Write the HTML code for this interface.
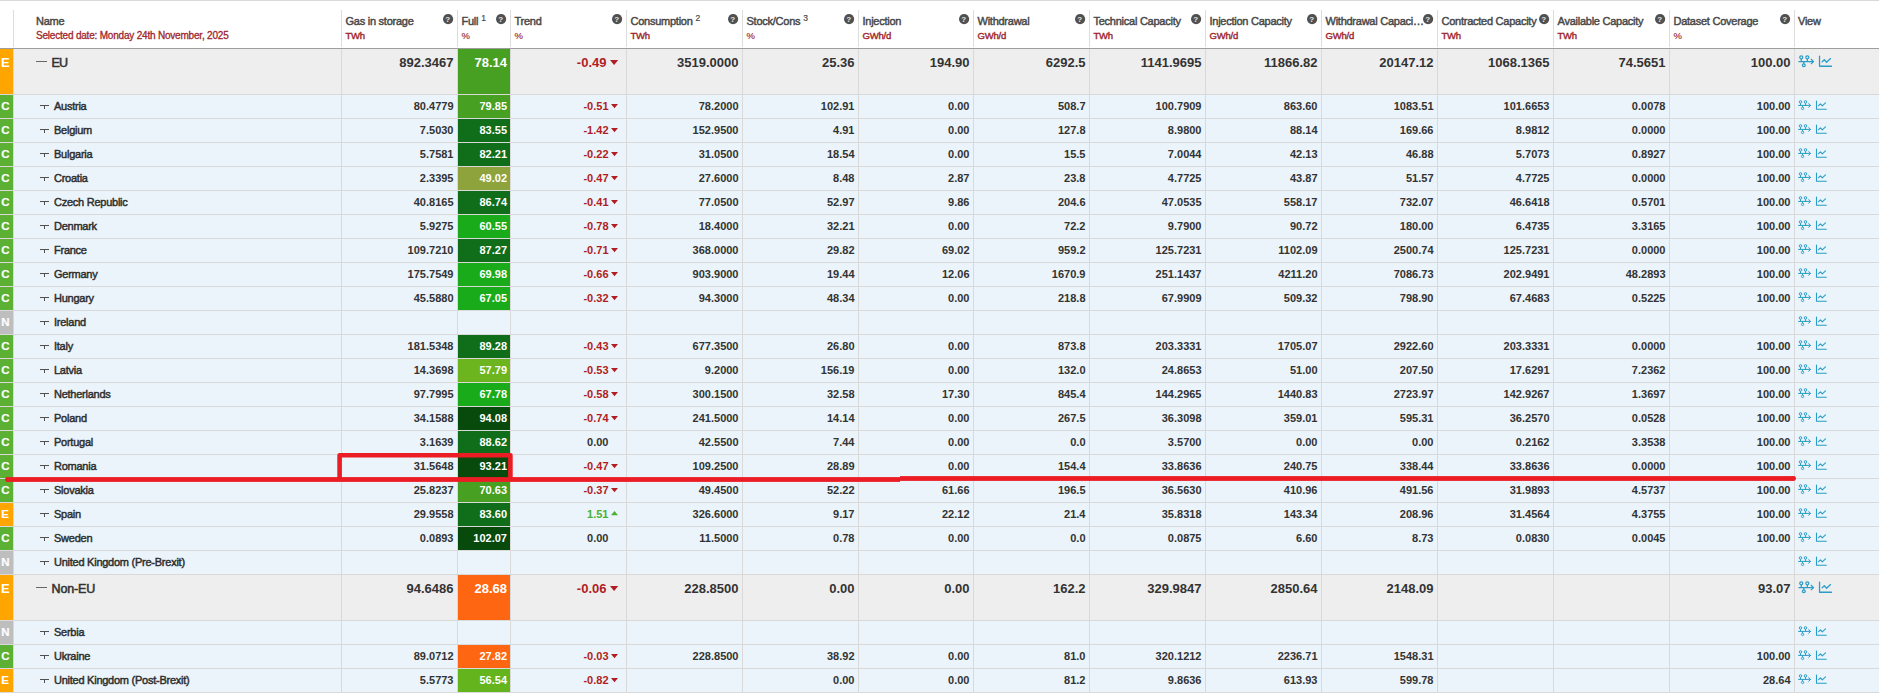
<!DOCTYPE html>
<html><head><meta charset="utf-8"><title>Gas storage</title>
<style>
html,body{margin:0;padding:0;background:#fff;}
body{width:1882px;height:693px;overflow:hidden;position:relative;font-family:"Liberation Sans",sans-serif;}
.a{position:absolute;}
.l{position:absolute;background:#d9d9d9;}
.t{position:absolute;white-space:nowrap;line-height:1;}
.ht{font-size:11px;color:#4a4a4a;}
.hu{font-size:9.5px;color:#a0262c;font-weight:bold;}
.sup{font-size:7px;color:#4a4a4a;}
.q{position:absolute;width:10px;height:10px;border-radius:5px;background:#4d4d4d;color:#fff;font-size:8px;font-weight:bold;text-align:center;line-height:10px;}
.n{font-weight:bold;color:#333;text-align:right;}
.code{position:absolute;color:#fff;font-weight:bold;text-align:center;}
svg{position:absolute;overflow:visible;}
</style></head><body>

<div class="l" style="left:0px;top:0px;width:1879px;height:1px;background:#d9d9d9"></div>
<div class="l" style="left:13px;top:10px;width:1px;height:37px;background:#dddddd"></div>
<div class="l" style="left:341px;top:10px;width:1px;height:37px;background:#dddddd"></div>
<div class="l" style="left:457px;top:10px;width:1px;height:37px;background:#dddddd"></div>
<div class="l" style="left:510px;top:10px;width:1px;height:37px;background:#dddddd"></div>
<div class="l" style="left:626px;top:10px;width:1px;height:37px;background:#dddddd"></div>
<div class="l" style="left:742px;top:10px;width:1px;height:37px;background:#dddddd"></div>
<div class="l" style="left:858px;top:10px;width:1px;height:37px;background:#dddddd"></div>
<div class="l" style="left:973px;top:10px;width:1px;height:37px;background:#dddddd"></div>
<div class="l" style="left:1089px;top:10px;width:1px;height:37px;background:#dddddd"></div>
<div class="l" style="left:1205px;top:10px;width:1px;height:37px;background:#dddddd"></div>
<div class="l" style="left:1321px;top:10px;width:1px;height:37px;background:#dddddd"></div>
<div class="l" style="left:1437px;top:10px;width:1px;height:37px;background:#dddddd"></div>
<div class="l" style="left:1553px;top:10px;width:1px;height:37px;background:#dddddd"></div>
<div class="l" style="left:1669px;top:10px;width:1px;height:37px;background:#dddddd"></div>
<div class="l" style="left:1794px;top:10px;width:1px;height:37px;background:#dddddd"></div>
<div class="l" style="left:0px;top:48px;width:1879px;height:1px;background:#9e9e9e"></div>
<div class="t " style="left:36.00px;top:16.05px;font-size:11px;color:#484848;letter-spacing:-0.25px;-webkit-text-stroke:0.45px #484848;">Name</div>
<div class="t " style="left:36.00px;top:31.45px;font-size:10px;color:#a0262c;letter-spacing:-0.2px;-webkit-text-stroke:0.3px #a0262c;">Selected date: Monday 24th November, 2025</div>
<div class="t " style="left:345.50px;top:16.05px;font-size:11px;color:#484848;letter-spacing:-0.25px;-webkit-text-stroke:0.45px #484848;">Gas in storage</div>
<div class="t " style="left:345.50px;top:30.90px;font-size:9.5px;color:#a0262c;letter-spacing:-0.2px;-webkit-text-stroke:0.4px #a0262c;">TWh</div>
<svg style="left:442.60px;top:14.2px" width="11" height="11"><circle cx="5.1" cy="5.1" r="5.1" fill="#505050"/></svg>
<div class="t" style="left:442.70px;top:15.6px;width:10px;text-align:center;font-size:8px;font-weight:bold;color:#e8e8e8">?</div>
<div class="t " style="left:461.50px;top:16.05px;font-size:11px;color:#484848;letter-spacing:-0.25px;-webkit-text-stroke:0.45px #484848;">Full</div>
<div class="t" style="left:481.22px;top:14px;font-size:8.5px;color:#4a4a4a;-webkit-text-stroke:0.2px #4a4a4a">1</div>
<div class="t " style="left:461.50px;top:30.90px;font-size:9.5px;color:#a0262c;-webkit-text-stroke:0.15px #a0262c;">%</div>
<svg style="left:495.60px;top:14.2px" width="11" height="11"><circle cx="5.1" cy="5.1" r="5.1" fill="#505050"/></svg>
<div class="t" style="left:495.70px;top:15.6px;width:10px;text-align:center;font-size:8px;font-weight:bold;color:#e8e8e8">?</div>
<div class="t " style="left:514.50px;top:16.05px;font-size:11px;color:#484848;letter-spacing:-0.25px;-webkit-text-stroke:0.45px #484848;">Trend</div>
<div class="t " style="left:514.50px;top:30.90px;font-size:9.5px;color:#a0262c;-webkit-text-stroke:0.15px #a0262c;">%</div>
<svg style="left:611.60px;top:14.2px" width="11" height="11"><circle cx="5.1" cy="5.1" r="5.1" fill="#505050"/></svg>
<div class="t" style="left:611.70px;top:15.6px;width:10px;text-align:center;font-size:8px;font-weight:bold;color:#e8e8e8">?</div>
<div class="t " style="left:630.50px;top:16.05px;font-size:11px;color:#484848;letter-spacing:-0.25px;-webkit-text-stroke:0.45px #484848;">Consumption</div>
<div class="t" style="left:695.56px;top:14px;font-size:8.5px;color:#4a4a4a;-webkit-text-stroke:0.2px #4a4a4a">2</div>
<div class="t " style="left:630.50px;top:30.90px;font-size:9.5px;color:#a0262c;letter-spacing:-0.2px;-webkit-text-stroke:0.4px #a0262c;">TWh</div>
<svg style="left:727.60px;top:14.2px" width="11" height="11"><circle cx="5.1" cy="5.1" r="5.1" fill="#505050"/></svg>
<div class="t" style="left:727.70px;top:15.6px;width:10px;text-align:center;font-size:8px;font-weight:bold;color:#e8e8e8">?</div>
<div class="t " style="left:746.50px;top:16.05px;font-size:11px;color:#484848;letter-spacing:-0.25px;-webkit-text-stroke:0.45px #484848;">Stock/Cons</div>
<div class="t" style="left:803.24px;top:14px;font-size:8.5px;color:#4a4a4a;-webkit-text-stroke:0.2px #4a4a4a">3</div>
<div class="t " style="left:746.50px;top:30.90px;font-size:9.5px;color:#a0262c;-webkit-text-stroke:0.15px #a0262c;">%</div>
<svg style="left:843.60px;top:14.2px" width="11" height="11"><circle cx="5.1" cy="5.1" r="5.1" fill="#505050"/></svg>
<div class="t" style="left:843.70px;top:15.6px;width:10px;text-align:center;font-size:8px;font-weight:bold;color:#e8e8e8">?</div>
<div class="t " style="left:862.50px;top:16.05px;font-size:11px;color:#484848;letter-spacing:-0.25px;-webkit-text-stroke:0.45px #484848;">Injection</div>
<div class="t " style="left:862.50px;top:30.90px;font-size:9.5px;color:#a0262c;letter-spacing:-0.2px;-webkit-text-stroke:0.4px #a0262c;">GWh/d</div>
<svg style="left:958.60px;top:14.2px" width="11" height="11"><circle cx="5.1" cy="5.1" r="5.1" fill="#505050"/></svg>
<div class="t" style="left:958.70px;top:15.6px;width:10px;text-align:center;font-size:8px;font-weight:bold;color:#e8e8e8">?</div>
<div class="t " style="left:977.50px;top:16.05px;font-size:11px;color:#484848;letter-spacing:-0.25px;-webkit-text-stroke:0.45px #484848;">Withdrawal</div>
<div class="t " style="left:977.50px;top:30.90px;font-size:9.5px;color:#a0262c;letter-spacing:-0.2px;-webkit-text-stroke:0.4px #a0262c;">GWh/d</div>
<svg style="left:1074.60px;top:14.2px" width="11" height="11"><circle cx="5.1" cy="5.1" r="5.1" fill="#505050"/></svg>
<div class="t" style="left:1074.70px;top:15.6px;width:10px;text-align:center;font-size:8px;font-weight:bold;color:#e8e8e8">?</div>
<div class="t " style="left:1093.50px;top:16.05px;font-size:11px;color:#484848;letter-spacing:-0.25px;-webkit-text-stroke:0.45px #484848;">Technical Capacity</div>
<div class="t " style="left:1093.50px;top:30.90px;font-size:9.5px;color:#a0262c;letter-spacing:-0.2px;-webkit-text-stroke:0.4px #a0262c;">TWh</div>
<svg style="left:1190.60px;top:14.2px" width="11" height="11"><circle cx="5.1" cy="5.1" r="5.1" fill="#505050"/></svg>
<div class="t" style="left:1190.70px;top:15.6px;width:10px;text-align:center;font-size:8px;font-weight:bold;color:#e8e8e8">?</div>
<div class="t " style="left:1209.50px;top:16.05px;font-size:11px;color:#484848;letter-spacing:-0.25px;-webkit-text-stroke:0.45px #484848;">Injection Capacity</div>
<div class="t " style="left:1209.50px;top:30.90px;font-size:9.5px;color:#a0262c;letter-spacing:-0.2px;-webkit-text-stroke:0.4px #a0262c;">GWh/d</div>
<svg style="left:1306.60px;top:14.2px" width="11" height="11"><circle cx="5.1" cy="5.1" r="5.1" fill="#505050"/></svg>
<div class="t" style="left:1306.70px;top:15.6px;width:10px;text-align:center;font-size:8px;font-weight:bold;color:#e8e8e8">?</div>
<div class="t " style="left:1325.50px;top:16.05px;font-size:11px;color:#484848;letter-spacing:-0.25px;-webkit-text-stroke:0.45px #484848;">Withdrawal Capaci…</div>
<div class="t " style="left:1325.50px;top:30.90px;font-size:9.5px;color:#a0262c;letter-spacing:-0.2px;-webkit-text-stroke:0.4px #a0262c;">GWh/d</div>
<svg style="left:1422.60px;top:14.2px" width="11" height="11"><circle cx="5.1" cy="5.1" r="5.1" fill="#505050"/></svg>
<div class="t" style="left:1422.70px;top:15.6px;width:10px;text-align:center;font-size:8px;font-weight:bold;color:#e8e8e8">?</div>
<div class="t " style="left:1441.50px;top:16.05px;font-size:11px;color:#484848;letter-spacing:-0.25px;-webkit-text-stroke:0.45px #484848;">Contracted Capacity</div>
<div class="t " style="left:1441.50px;top:30.90px;font-size:9.5px;color:#a0262c;letter-spacing:-0.2px;-webkit-text-stroke:0.4px #a0262c;">TWh</div>
<svg style="left:1538.60px;top:14.2px" width="11" height="11"><circle cx="5.1" cy="5.1" r="5.1" fill="#505050"/></svg>
<div class="t" style="left:1538.70px;top:15.6px;width:10px;text-align:center;font-size:8px;font-weight:bold;color:#e8e8e8">?</div>
<div class="t " style="left:1557.50px;top:16.05px;font-size:11px;color:#484848;letter-spacing:-0.25px;-webkit-text-stroke:0.45px #484848;">Available Capacity</div>
<div class="t " style="left:1557.50px;top:30.90px;font-size:9.5px;color:#a0262c;letter-spacing:-0.2px;-webkit-text-stroke:0.4px #a0262c;">TWh</div>
<svg style="left:1654.60px;top:14.2px" width="11" height="11"><circle cx="5.1" cy="5.1" r="5.1" fill="#505050"/></svg>
<div class="t" style="left:1654.70px;top:15.6px;width:10px;text-align:center;font-size:8px;font-weight:bold;color:#e8e8e8">?</div>
<div class="t " style="left:1673.50px;top:16.05px;font-size:11px;color:#484848;letter-spacing:-0.25px;-webkit-text-stroke:0.45px #484848;">Dataset Coverage</div>
<div class="t " style="left:1673.50px;top:30.90px;font-size:9.5px;color:#a0262c;-webkit-text-stroke:0.15px #a0262c;">%</div>
<svg style="left:1779.60px;top:14.2px" width="11" height="11"><circle cx="5.1" cy="5.1" r="5.1" fill="#505050"/></svg>
<div class="t" style="left:1779.70px;top:15.6px;width:10px;text-align:center;font-size:8px;font-weight:bold;color:#e8e8e8">?</div>
<div class="t " style="left:1798.00px;top:16.05px;font-size:11px;color:#484848;letter-spacing:-0.25px;-webkit-text-stroke:0.45px #484848;">View</div>
<div class="a" style="left:0px;top:49px;width:1879px;height:45px;background:#eeeeee"></div>
<div class="a" style="left:0px;top:49px;width:13px;height:45px;background:#ffa500"></div>
<div class="t " style="left:1.00px;top:56.23px;font-size:13px;color:#fff;font-weight:bold;">E</div>
<div class="a" style="left:36px;top:61px;width:11px;height:1px;background:#666"></div>
<div class="t " style="left:51.50px;top:56.69px;font-size:12.5px;color:#333;letter-spacing:-0.9px;-webkit-text-stroke:0.55px #333;">EU</div>
<div class="a" style="left:458px;top:49px;width:52px;height:45px;background:#48a023"></div>
<div class="t " style="right:1428.50px;top:56.23px;font-size:13px;color:#333;font-weight:bold;">892.3467</div>
<div class="t " style="right:1375.00px;top:56.23px;font-size:13px;color:#fff;font-weight:bold;">78.14</div>
<div class="t " style="right:1275.50px;top:56.23px;font-size:13px;color:#b01e24;font-weight:bold;">-0.49</div>
<svg style="left:609.8px;top:59.6px" width="9" height="6"><path d="M0 0H8.19L4.095 4.914Z" fill="#b01e24"/></svg>
<div class="t " style="right:1143.50px;top:56.23px;font-size:13px;color:#333;font-weight:bold;">3519.0000</div>
<div class="t " style="right:1027.50px;top:56.23px;font-size:13px;color:#333;font-weight:bold;">25.36</div>
<div class="t " style="right:912.50px;top:56.23px;font-size:13px;color:#333;font-weight:bold;">194.90</div>
<div class="t " style="right:796.50px;top:56.23px;font-size:13px;color:#333;font-weight:bold;">6292.5</div>
<div class="t " style="right:680.50px;top:56.23px;font-size:13px;color:#333;font-weight:bold;">1141.9695</div>
<div class="t " style="right:564.50px;top:56.23px;font-size:13px;color:#333;font-weight:bold;">11866.82</div>
<div class="t " style="right:448.50px;top:56.23px;font-size:13px;color:#333;font-weight:bold;">20147.12</div>
<div class="t " style="right:332.50px;top:56.23px;font-size:13px;color:#333;font-weight:bold;">1068.1365</div>
<div class="t " style="right:216.50px;top:56.23px;font-size:13px;color:#333;font-weight:bold;">74.5651</div>
<div class="t " style="right:91.50px;top:56.23px;font-size:13px;color:#333;font-weight:bold;">100.00</div>
<svg style="left:1795px;top:49px" width="22" height="20"><g transform="translate(-0.46 -0.1) scale(1.22)" fill="none" stroke="#2a9cc8" stroke-width="1.0245901639344261" stroke-linejoin="round"><path d="M3.2 10.4H15.6M13.4 8.3L15.6 10.4L13.4 12.5M5.5 10.4V8.2M10.5 10.4V8.2M7.6 10.4V12.2"/><circle cx="5.5" cy="6.9" r="1.25"/><circle cx="10.5" cy="6.9" r="1.25"/><circle cx="7.6" cy="13.4" r="1.15"/></g></svg>
<svg style="left:1795px;top:49px" width="40" height="20"><g transform="translate(-1.7 -0.05) scale(1.22)" fill="none" stroke="#2a9cc8" stroke-width="1.0655737704918034" stroke-linecap="round" stroke-linejoin="round"><path d="M21.5 6V14.2H31.3M23.6 10.6L25.4 8.8L27.3 10.9L30.5 7.9"/></g></svg>
<div class="l" style="left:0px;top:94px;width:1879px;height:1px;background:#d9d9d9"></div>
<div class="a" style="left:0px;top:95px;width:1879px;height:23px;background:#eaf4fa"></div>
<div class="a" style="left:0px;top:95px;width:13px;height:23px;background:#5cb034"></div>
<div class="t " style="left:1.30px;top:100.89px;font-size:11.5px;color:#fff;font-weight:bold;-webkit-text-stroke:0.15px #fff;">C</div>
<div class="a" style="left:40px;top:105px;width:9px;height:1px;background:#505050"></div>
<div class="a" style="left:44px;top:105px;width:1px;height:4px;background:#505050"></div>
<div class="t " style="left:54.00px;top:101.05px;font-size:11px;color:#2e2e2e;letter-spacing:-0.25px;-webkit-text-stroke:0.45px #2e2e2e;">Austria</div>
<div class="a" style="left:458px;top:95px;width:52px;height:23px;background:#48a023"></div>
<div class="t " style="right:1428.50px;top:101.05px;font-size:11px;color:#333;font-weight:bold;">80.4779</div>
<div class="t " style="right:1375.00px;top:101.05px;font-size:11px;color:#fff;font-weight:bold;">79.85</div>
<div class="t " style="right:1273.50px;top:101.05px;font-size:11px;color:#b01e24;font-weight:bold;">-0.51</div>
<svg style="left:611px;top:104px" width="9" height="6"><path d="M0 0H7L3.5 4.2Z" fill="#b01e24"/></svg>
<div class="t " style="right:1143.50px;top:101.05px;font-size:11px;color:#333;font-weight:bold;">78.2000</div>
<div class="t " style="right:1027.50px;top:101.05px;font-size:11px;color:#333;font-weight:bold;">102.91</div>
<div class="t " style="right:912.50px;top:101.05px;font-size:11px;color:#333;font-weight:bold;">0.00</div>
<div class="t " style="right:796.50px;top:101.05px;font-size:11px;color:#333;font-weight:bold;">508.7</div>
<div class="t " style="right:680.50px;top:101.05px;font-size:11px;color:#333;font-weight:bold;">100.7909</div>
<div class="t " style="right:564.50px;top:101.05px;font-size:11px;color:#333;font-weight:bold;">863.60</div>
<div class="t " style="right:448.50px;top:101.05px;font-size:11px;color:#333;font-weight:bold;">1083.51</div>
<div class="t " style="right:332.50px;top:101.05px;font-size:11px;color:#333;font-weight:bold;">101.6653</div>
<div class="t " style="right:216.50px;top:101.05px;font-size:11px;color:#333;font-weight:bold;">0.0078</div>
<div class="t " style="right:91.50px;top:101.05px;font-size:11px;color:#333;font-weight:bold;">100.00</div>
<svg style="left:1795px;top:95px" width="22" height="20"><g transform="translate(0 0) scale(1.0)" fill="none" stroke="#2a9cc8" stroke-width="1.0" stroke-linejoin="round"><path d="M3.2 10.4H15.6M13.4 8.3L15.6 10.4L13.4 12.5M5.5 10.4V8.2M10.5 10.4V8.2M7.6 10.4V12.2"/><circle cx="5.5" cy="6.9" r="1.25"/><circle cx="10.5" cy="6.9" r="1.25"/><circle cx="7.6" cy="13.4" r="1.15"/></g></svg>
<svg style="left:1795px;top:95px" width="40" height="20"><g transform="translate(0 0) scale(1.0)" fill="none" stroke="#2a9cc8" stroke-width="1.1" stroke-linecap="round" stroke-linejoin="round"><path d="M21.5 6V14.2H31.3M23.6 10.6L25.4 8.8L27.3 10.9L30.5 7.9"/></g></svg>
<div class="l" style="left:0px;top:118px;width:1879px;height:1px;background:#d9d9d9"></div>
<div class="a" style="left:0px;top:119px;width:1879px;height:23px;background:#eaf4fa"></div>
<div class="a" style="left:0px;top:119px;width:13px;height:23px;background:#5cb034"></div>
<div class="t " style="left:1.30px;top:124.89px;font-size:11.5px;color:#fff;font-weight:bold;-webkit-text-stroke:0.15px #fff;">C</div>
<div class="a" style="left:40px;top:129px;width:9px;height:1px;background:#505050"></div>
<div class="a" style="left:44px;top:129px;width:1px;height:4px;background:#505050"></div>
<div class="t " style="left:54.00px;top:125.05px;font-size:11px;color:#2e2e2e;letter-spacing:-0.25px;-webkit-text-stroke:0.45px #2e2e2e;">Belgium</div>
<div class="a" style="left:458px;top:119px;width:52px;height:23px;background:#106e1a"></div>
<div class="t " style="right:1428.50px;top:125.05px;font-size:11px;color:#333;font-weight:bold;">7.5030</div>
<div class="t " style="right:1375.00px;top:125.05px;font-size:11px;color:#fff;font-weight:bold;">83.55</div>
<div class="t " style="right:1273.50px;top:125.05px;font-size:11px;color:#b01e24;font-weight:bold;">-1.42</div>
<svg style="left:611px;top:128px" width="9" height="6"><path d="M0 0H7L3.5 4.2Z" fill="#b01e24"/></svg>
<div class="t " style="right:1143.50px;top:125.05px;font-size:11px;color:#333;font-weight:bold;">152.9500</div>
<div class="t " style="right:1027.50px;top:125.05px;font-size:11px;color:#333;font-weight:bold;">4.91</div>
<div class="t " style="right:912.50px;top:125.05px;font-size:11px;color:#333;font-weight:bold;">0.00</div>
<div class="t " style="right:796.50px;top:125.05px;font-size:11px;color:#333;font-weight:bold;">127.8</div>
<div class="t " style="right:680.50px;top:125.05px;font-size:11px;color:#333;font-weight:bold;">8.9800</div>
<div class="t " style="right:564.50px;top:125.05px;font-size:11px;color:#333;font-weight:bold;">88.14</div>
<div class="t " style="right:448.50px;top:125.05px;font-size:11px;color:#333;font-weight:bold;">169.66</div>
<div class="t " style="right:332.50px;top:125.05px;font-size:11px;color:#333;font-weight:bold;">8.9812</div>
<div class="t " style="right:216.50px;top:125.05px;font-size:11px;color:#333;font-weight:bold;">0.0000</div>
<div class="t " style="right:91.50px;top:125.05px;font-size:11px;color:#333;font-weight:bold;">100.00</div>
<svg style="left:1795px;top:119px" width="22" height="20"><g transform="translate(0 0) scale(1.0)" fill="none" stroke="#2a9cc8" stroke-width="1.0" stroke-linejoin="round"><path d="M3.2 10.4H15.6M13.4 8.3L15.6 10.4L13.4 12.5M5.5 10.4V8.2M10.5 10.4V8.2M7.6 10.4V12.2"/><circle cx="5.5" cy="6.9" r="1.25"/><circle cx="10.5" cy="6.9" r="1.25"/><circle cx="7.6" cy="13.4" r="1.15"/></g></svg>
<svg style="left:1795px;top:119px" width="40" height="20"><g transform="translate(0 0) scale(1.0)" fill="none" stroke="#2a9cc8" stroke-width="1.1" stroke-linecap="round" stroke-linejoin="round"><path d="M21.5 6V14.2H31.3M23.6 10.6L25.4 8.8L27.3 10.9L30.5 7.9"/></g></svg>
<div class="l" style="left:0px;top:142px;width:1879px;height:1px;background:#d9d9d9"></div>
<div class="a" style="left:0px;top:143px;width:1879px;height:23px;background:#eaf4fa"></div>
<div class="a" style="left:0px;top:143px;width:13px;height:23px;background:#5cb034"></div>
<div class="t " style="left:1.30px;top:148.89px;font-size:11.5px;color:#fff;font-weight:bold;-webkit-text-stroke:0.15px #fff;">C</div>
<div class="a" style="left:40px;top:153px;width:9px;height:1px;background:#505050"></div>
<div class="a" style="left:44px;top:153px;width:1px;height:4px;background:#505050"></div>
<div class="t " style="left:54.00px;top:149.04px;font-size:11px;color:#2e2e2e;letter-spacing:-0.25px;-webkit-text-stroke:0.45px #2e2e2e;">Bulgaria</div>
<div class="a" style="left:458px;top:143px;width:52px;height:23px;background:#106e1a"></div>
<div class="t " style="right:1428.50px;top:149.04px;font-size:11px;color:#333;font-weight:bold;">5.7581</div>
<div class="t " style="right:1375.00px;top:149.04px;font-size:11px;color:#fff;font-weight:bold;">82.21</div>
<div class="t " style="right:1273.50px;top:149.04px;font-size:11px;color:#b01e24;font-weight:bold;">-0.22</div>
<svg style="left:611px;top:152px" width="9" height="6"><path d="M0 0H7L3.5 4.2Z" fill="#b01e24"/></svg>
<div class="t " style="right:1143.50px;top:149.04px;font-size:11px;color:#333;font-weight:bold;">31.0500</div>
<div class="t " style="right:1027.50px;top:149.04px;font-size:11px;color:#333;font-weight:bold;">18.54</div>
<div class="t " style="right:912.50px;top:149.04px;font-size:11px;color:#333;font-weight:bold;">0.00</div>
<div class="t " style="right:796.50px;top:149.04px;font-size:11px;color:#333;font-weight:bold;">15.5</div>
<div class="t " style="right:680.50px;top:149.04px;font-size:11px;color:#333;font-weight:bold;">7.0044</div>
<div class="t " style="right:564.50px;top:149.04px;font-size:11px;color:#333;font-weight:bold;">42.13</div>
<div class="t " style="right:448.50px;top:149.04px;font-size:11px;color:#333;font-weight:bold;">46.88</div>
<div class="t " style="right:332.50px;top:149.04px;font-size:11px;color:#333;font-weight:bold;">5.7073</div>
<div class="t " style="right:216.50px;top:149.04px;font-size:11px;color:#333;font-weight:bold;">0.8927</div>
<div class="t " style="right:91.50px;top:149.04px;font-size:11px;color:#333;font-weight:bold;">100.00</div>
<svg style="left:1795px;top:143px" width="22" height="20"><g transform="translate(0 0) scale(1.0)" fill="none" stroke="#2a9cc8" stroke-width="1.0" stroke-linejoin="round"><path d="M3.2 10.4H15.6M13.4 8.3L15.6 10.4L13.4 12.5M5.5 10.4V8.2M10.5 10.4V8.2M7.6 10.4V12.2"/><circle cx="5.5" cy="6.9" r="1.25"/><circle cx="10.5" cy="6.9" r="1.25"/><circle cx="7.6" cy="13.4" r="1.15"/></g></svg>
<svg style="left:1795px;top:143px" width="40" height="20"><g transform="translate(0 0) scale(1.0)" fill="none" stroke="#2a9cc8" stroke-width="1.1" stroke-linecap="round" stroke-linejoin="round"><path d="M21.5 6V14.2H31.3M23.6 10.6L25.4 8.8L27.3 10.9L30.5 7.9"/></g></svg>
<div class="l" style="left:0px;top:166px;width:1879px;height:1px;background:#d9d9d9"></div>
<div class="a" style="left:0px;top:167px;width:1879px;height:23px;background:#eaf4fa"></div>
<div class="a" style="left:0px;top:167px;width:13px;height:23px;background:#5cb034"></div>
<div class="t " style="left:1.30px;top:172.89px;font-size:11.5px;color:#fff;font-weight:bold;-webkit-text-stroke:0.15px #fff;">C</div>
<div class="a" style="left:40px;top:177px;width:9px;height:1px;background:#505050"></div>
<div class="a" style="left:44px;top:177px;width:1px;height:4px;background:#505050"></div>
<div class="t " style="left:54.00px;top:173.04px;font-size:11px;color:#2e2e2e;letter-spacing:-0.25px;-webkit-text-stroke:0.45px #2e2e2e;">Croatia</div>
<div class="a" style="left:458px;top:167px;width:52px;height:23px;background:#8fa33d"></div>
<div class="t " style="right:1428.50px;top:173.04px;font-size:11px;color:#333;font-weight:bold;">2.3395</div>
<div class="t " style="right:1375.00px;top:173.04px;font-size:11px;color:#fff;font-weight:bold;">49.02</div>
<div class="t " style="right:1273.50px;top:173.04px;font-size:11px;color:#b01e24;font-weight:bold;">-0.47</div>
<svg style="left:611px;top:176px" width="9" height="6"><path d="M0 0H7L3.5 4.2Z" fill="#b01e24"/></svg>
<div class="t " style="right:1143.50px;top:173.04px;font-size:11px;color:#333;font-weight:bold;">27.6000</div>
<div class="t " style="right:1027.50px;top:173.04px;font-size:11px;color:#333;font-weight:bold;">8.48</div>
<div class="t " style="right:912.50px;top:173.04px;font-size:11px;color:#333;font-weight:bold;">2.87</div>
<div class="t " style="right:796.50px;top:173.04px;font-size:11px;color:#333;font-weight:bold;">23.8</div>
<div class="t " style="right:680.50px;top:173.04px;font-size:11px;color:#333;font-weight:bold;">4.7725</div>
<div class="t " style="right:564.50px;top:173.04px;font-size:11px;color:#333;font-weight:bold;">43.87</div>
<div class="t " style="right:448.50px;top:173.04px;font-size:11px;color:#333;font-weight:bold;">51.57</div>
<div class="t " style="right:332.50px;top:173.04px;font-size:11px;color:#333;font-weight:bold;">4.7725</div>
<div class="t " style="right:216.50px;top:173.04px;font-size:11px;color:#333;font-weight:bold;">0.0000</div>
<div class="t " style="right:91.50px;top:173.04px;font-size:11px;color:#333;font-weight:bold;">100.00</div>
<svg style="left:1795px;top:167px" width="22" height="20"><g transform="translate(0 0) scale(1.0)" fill="none" stroke="#2a9cc8" stroke-width="1.0" stroke-linejoin="round"><path d="M3.2 10.4H15.6M13.4 8.3L15.6 10.4L13.4 12.5M5.5 10.4V8.2M10.5 10.4V8.2M7.6 10.4V12.2"/><circle cx="5.5" cy="6.9" r="1.25"/><circle cx="10.5" cy="6.9" r="1.25"/><circle cx="7.6" cy="13.4" r="1.15"/></g></svg>
<svg style="left:1795px;top:167px" width="40" height="20"><g transform="translate(0 0) scale(1.0)" fill="none" stroke="#2a9cc8" stroke-width="1.1" stroke-linecap="round" stroke-linejoin="round"><path d="M21.5 6V14.2H31.3M23.6 10.6L25.4 8.8L27.3 10.9L30.5 7.9"/></g></svg>
<div class="l" style="left:0px;top:190px;width:1879px;height:1px;background:#d9d9d9"></div>
<div class="a" style="left:0px;top:191px;width:1879px;height:23px;background:#eaf4fa"></div>
<div class="a" style="left:0px;top:191px;width:13px;height:23px;background:#5cb034"></div>
<div class="t " style="left:1.30px;top:196.89px;font-size:11.5px;color:#fff;font-weight:bold;-webkit-text-stroke:0.15px #fff;">C</div>
<div class="a" style="left:40px;top:201px;width:9px;height:1px;background:#505050"></div>
<div class="a" style="left:44px;top:201px;width:1px;height:4px;background:#505050"></div>
<div class="t " style="left:54.00px;top:197.04px;font-size:11px;color:#2e2e2e;letter-spacing:-0.25px;-webkit-text-stroke:0.45px #2e2e2e;">Czech Republic</div>
<div class="a" style="left:458px;top:191px;width:52px;height:23px;background:#106e1a"></div>
<div class="t " style="right:1428.50px;top:197.04px;font-size:11px;color:#333;font-weight:bold;">40.8165</div>
<div class="t " style="right:1375.00px;top:197.04px;font-size:11px;color:#fff;font-weight:bold;">86.74</div>
<div class="t " style="right:1273.50px;top:197.04px;font-size:11px;color:#b01e24;font-weight:bold;">-0.41</div>
<svg style="left:611px;top:200px" width="9" height="6"><path d="M0 0H7L3.5 4.2Z" fill="#b01e24"/></svg>
<div class="t " style="right:1143.50px;top:197.04px;font-size:11px;color:#333;font-weight:bold;">77.0500</div>
<div class="t " style="right:1027.50px;top:197.04px;font-size:11px;color:#333;font-weight:bold;">52.97</div>
<div class="t " style="right:912.50px;top:197.04px;font-size:11px;color:#333;font-weight:bold;">9.86</div>
<div class="t " style="right:796.50px;top:197.04px;font-size:11px;color:#333;font-weight:bold;">204.6</div>
<div class="t " style="right:680.50px;top:197.04px;font-size:11px;color:#333;font-weight:bold;">47.0535</div>
<div class="t " style="right:564.50px;top:197.04px;font-size:11px;color:#333;font-weight:bold;">558.17</div>
<div class="t " style="right:448.50px;top:197.04px;font-size:11px;color:#333;font-weight:bold;">732.07</div>
<div class="t " style="right:332.50px;top:197.04px;font-size:11px;color:#333;font-weight:bold;">46.6418</div>
<div class="t " style="right:216.50px;top:197.04px;font-size:11px;color:#333;font-weight:bold;">0.5701</div>
<div class="t " style="right:91.50px;top:197.04px;font-size:11px;color:#333;font-weight:bold;">100.00</div>
<svg style="left:1795px;top:191px" width="22" height="20"><g transform="translate(0 0) scale(1.0)" fill="none" stroke="#2a9cc8" stroke-width="1.0" stroke-linejoin="round"><path d="M3.2 10.4H15.6M13.4 8.3L15.6 10.4L13.4 12.5M5.5 10.4V8.2M10.5 10.4V8.2M7.6 10.4V12.2"/><circle cx="5.5" cy="6.9" r="1.25"/><circle cx="10.5" cy="6.9" r="1.25"/><circle cx="7.6" cy="13.4" r="1.15"/></g></svg>
<svg style="left:1795px;top:191px" width="40" height="20"><g transform="translate(0 0) scale(1.0)" fill="none" stroke="#2a9cc8" stroke-width="1.1" stroke-linecap="round" stroke-linejoin="round"><path d="M21.5 6V14.2H31.3M23.6 10.6L25.4 8.8L27.3 10.9L30.5 7.9"/></g></svg>
<div class="l" style="left:0px;top:214px;width:1879px;height:1px;background:#d9d9d9"></div>
<div class="a" style="left:0px;top:215px;width:1879px;height:23px;background:#eaf4fa"></div>
<div class="a" style="left:0px;top:215px;width:13px;height:23px;background:#5cb034"></div>
<div class="t " style="left:1.30px;top:220.89px;font-size:11.5px;color:#fff;font-weight:bold;-webkit-text-stroke:0.15px #fff;">C</div>
<div class="a" style="left:40px;top:225px;width:9px;height:1px;background:#505050"></div>
<div class="a" style="left:44px;top:225px;width:1px;height:4px;background:#505050"></div>
<div class="t " style="left:54.00px;top:221.04px;font-size:11px;color:#2e2e2e;letter-spacing:-0.25px;-webkit-text-stroke:0.45px #2e2e2e;">Denmark</div>
<div class="a" style="left:458px;top:215px;width:52px;height:23px;background:#1aab1a"></div>
<div class="t " style="right:1428.50px;top:221.04px;font-size:11px;color:#333;font-weight:bold;">5.9275</div>
<div class="t " style="right:1375.00px;top:221.04px;font-size:11px;color:#fff;font-weight:bold;">60.55</div>
<div class="t " style="right:1273.50px;top:221.04px;font-size:11px;color:#b01e24;font-weight:bold;">-0.78</div>
<svg style="left:611px;top:224px" width="9" height="6"><path d="M0 0H7L3.5 4.2Z" fill="#b01e24"/></svg>
<div class="t " style="right:1143.50px;top:221.04px;font-size:11px;color:#333;font-weight:bold;">18.4000</div>
<div class="t " style="right:1027.50px;top:221.04px;font-size:11px;color:#333;font-weight:bold;">32.21</div>
<div class="t " style="right:912.50px;top:221.04px;font-size:11px;color:#333;font-weight:bold;">0.00</div>
<div class="t " style="right:796.50px;top:221.04px;font-size:11px;color:#333;font-weight:bold;">72.2</div>
<div class="t " style="right:680.50px;top:221.04px;font-size:11px;color:#333;font-weight:bold;">9.7900</div>
<div class="t " style="right:564.50px;top:221.04px;font-size:11px;color:#333;font-weight:bold;">90.72</div>
<div class="t " style="right:448.50px;top:221.04px;font-size:11px;color:#333;font-weight:bold;">180.00</div>
<div class="t " style="right:332.50px;top:221.04px;font-size:11px;color:#333;font-weight:bold;">6.4735</div>
<div class="t " style="right:216.50px;top:221.04px;font-size:11px;color:#333;font-weight:bold;">3.3165</div>
<div class="t " style="right:91.50px;top:221.04px;font-size:11px;color:#333;font-weight:bold;">100.00</div>
<svg style="left:1795px;top:215px" width="22" height="20"><g transform="translate(0 0) scale(1.0)" fill="none" stroke="#2a9cc8" stroke-width="1.0" stroke-linejoin="round"><path d="M3.2 10.4H15.6M13.4 8.3L15.6 10.4L13.4 12.5M5.5 10.4V8.2M10.5 10.4V8.2M7.6 10.4V12.2"/><circle cx="5.5" cy="6.9" r="1.25"/><circle cx="10.5" cy="6.9" r="1.25"/><circle cx="7.6" cy="13.4" r="1.15"/></g></svg>
<svg style="left:1795px;top:215px" width="40" height="20"><g transform="translate(0 0) scale(1.0)" fill="none" stroke="#2a9cc8" stroke-width="1.1" stroke-linecap="round" stroke-linejoin="round"><path d="M21.5 6V14.2H31.3M23.6 10.6L25.4 8.8L27.3 10.9L30.5 7.9"/></g></svg>
<div class="l" style="left:0px;top:238px;width:1879px;height:1px;background:#d9d9d9"></div>
<div class="a" style="left:0px;top:239px;width:1879px;height:23px;background:#eaf4fa"></div>
<div class="a" style="left:0px;top:239px;width:13px;height:23px;background:#5cb034"></div>
<div class="t " style="left:1.30px;top:244.89px;font-size:11.5px;color:#fff;font-weight:bold;-webkit-text-stroke:0.15px #fff;">C</div>
<div class="a" style="left:40px;top:249px;width:9px;height:1px;background:#505050"></div>
<div class="a" style="left:44px;top:249px;width:1px;height:4px;background:#505050"></div>
<div class="t " style="left:54.00px;top:245.04px;font-size:11px;color:#2e2e2e;letter-spacing:-0.25px;-webkit-text-stroke:0.45px #2e2e2e;">France</div>
<div class="a" style="left:458px;top:239px;width:52px;height:23px;background:#106e1a"></div>
<div class="t " style="right:1428.50px;top:245.04px;font-size:11px;color:#333;font-weight:bold;">109.7210</div>
<div class="t " style="right:1375.00px;top:245.04px;font-size:11px;color:#fff;font-weight:bold;">87.27</div>
<div class="t " style="right:1273.50px;top:245.04px;font-size:11px;color:#b01e24;font-weight:bold;">-0.71</div>
<svg style="left:611px;top:248px" width="9" height="6"><path d="M0 0H7L3.5 4.2Z" fill="#b01e24"/></svg>
<div class="t " style="right:1143.50px;top:245.04px;font-size:11px;color:#333;font-weight:bold;">368.0000</div>
<div class="t " style="right:1027.50px;top:245.04px;font-size:11px;color:#333;font-weight:bold;">29.82</div>
<div class="t " style="right:912.50px;top:245.04px;font-size:11px;color:#333;font-weight:bold;">69.02</div>
<div class="t " style="right:796.50px;top:245.04px;font-size:11px;color:#333;font-weight:bold;">959.2</div>
<div class="t " style="right:680.50px;top:245.04px;font-size:11px;color:#333;font-weight:bold;">125.7231</div>
<div class="t " style="right:564.50px;top:245.04px;font-size:11px;color:#333;font-weight:bold;">1102.09</div>
<div class="t " style="right:448.50px;top:245.04px;font-size:11px;color:#333;font-weight:bold;">2500.74</div>
<div class="t " style="right:332.50px;top:245.04px;font-size:11px;color:#333;font-weight:bold;">125.7231</div>
<div class="t " style="right:216.50px;top:245.04px;font-size:11px;color:#333;font-weight:bold;">0.0000</div>
<div class="t " style="right:91.50px;top:245.04px;font-size:11px;color:#333;font-weight:bold;">100.00</div>
<svg style="left:1795px;top:239px" width="22" height="20"><g transform="translate(0 0) scale(1.0)" fill="none" stroke="#2a9cc8" stroke-width="1.0" stroke-linejoin="round"><path d="M3.2 10.4H15.6M13.4 8.3L15.6 10.4L13.4 12.5M5.5 10.4V8.2M10.5 10.4V8.2M7.6 10.4V12.2"/><circle cx="5.5" cy="6.9" r="1.25"/><circle cx="10.5" cy="6.9" r="1.25"/><circle cx="7.6" cy="13.4" r="1.15"/></g></svg>
<svg style="left:1795px;top:239px" width="40" height="20"><g transform="translate(0 0) scale(1.0)" fill="none" stroke="#2a9cc8" stroke-width="1.1" stroke-linecap="round" stroke-linejoin="round"><path d="M21.5 6V14.2H31.3M23.6 10.6L25.4 8.8L27.3 10.9L30.5 7.9"/></g></svg>
<div class="l" style="left:0px;top:262px;width:1879px;height:1px;background:#d9d9d9"></div>
<div class="a" style="left:0px;top:263px;width:1879px;height:23px;background:#eaf4fa"></div>
<div class="a" style="left:0px;top:263px;width:13px;height:23px;background:#5cb034"></div>
<div class="t " style="left:1.30px;top:268.89px;font-size:11.5px;color:#fff;font-weight:bold;-webkit-text-stroke:0.15px #fff;">C</div>
<div class="a" style="left:40px;top:273px;width:9px;height:1px;background:#505050"></div>
<div class="a" style="left:44px;top:273px;width:1px;height:4px;background:#505050"></div>
<div class="t " style="left:54.00px;top:269.05px;font-size:11px;color:#2e2e2e;letter-spacing:-0.25px;-webkit-text-stroke:0.45px #2e2e2e;">Germany</div>
<div class="a" style="left:458px;top:263px;width:52px;height:23px;background:#1aab1a"></div>
<div class="t " style="right:1428.50px;top:269.05px;font-size:11px;color:#333;font-weight:bold;">175.7549</div>
<div class="t " style="right:1375.00px;top:269.05px;font-size:11px;color:#fff;font-weight:bold;">69.98</div>
<div class="t " style="right:1273.50px;top:269.05px;font-size:11px;color:#b01e24;font-weight:bold;">-0.66</div>
<svg style="left:611px;top:272px" width="9" height="6"><path d="M0 0H7L3.5 4.2Z" fill="#b01e24"/></svg>
<div class="t " style="right:1143.50px;top:269.05px;font-size:11px;color:#333;font-weight:bold;">903.9000</div>
<div class="t " style="right:1027.50px;top:269.05px;font-size:11px;color:#333;font-weight:bold;">19.44</div>
<div class="t " style="right:912.50px;top:269.05px;font-size:11px;color:#333;font-weight:bold;">12.06</div>
<div class="t " style="right:796.50px;top:269.05px;font-size:11px;color:#333;font-weight:bold;">1670.9</div>
<div class="t " style="right:680.50px;top:269.05px;font-size:11px;color:#333;font-weight:bold;">251.1437</div>
<div class="t " style="right:564.50px;top:269.05px;font-size:11px;color:#333;font-weight:bold;">4211.20</div>
<div class="t " style="right:448.50px;top:269.05px;font-size:11px;color:#333;font-weight:bold;">7086.73</div>
<div class="t " style="right:332.50px;top:269.05px;font-size:11px;color:#333;font-weight:bold;">202.9491</div>
<div class="t " style="right:216.50px;top:269.05px;font-size:11px;color:#333;font-weight:bold;">48.2893</div>
<div class="t " style="right:91.50px;top:269.05px;font-size:11px;color:#333;font-weight:bold;">100.00</div>
<svg style="left:1795px;top:263px" width="22" height="20"><g transform="translate(0 0) scale(1.0)" fill="none" stroke="#2a9cc8" stroke-width="1.0" stroke-linejoin="round"><path d="M3.2 10.4H15.6M13.4 8.3L15.6 10.4L13.4 12.5M5.5 10.4V8.2M10.5 10.4V8.2M7.6 10.4V12.2"/><circle cx="5.5" cy="6.9" r="1.25"/><circle cx="10.5" cy="6.9" r="1.25"/><circle cx="7.6" cy="13.4" r="1.15"/></g></svg>
<svg style="left:1795px;top:263px" width="40" height="20"><g transform="translate(0 0) scale(1.0)" fill="none" stroke="#2a9cc8" stroke-width="1.1" stroke-linecap="round" stroke-linejoin="round"><path d="M21.5 6V14.2H31.3M23.6 10.6L25.4 8.8L27.3 10.9L30.5 7.9"/></g></svg>
<div class="l" style="left:0px;top:286px;width:1879px;height:1px;background:#d9d9d9"></div>
<div class="a" style="left:0px;top:287px;width:1879px;height:23px;background:#eaf4fa"></div>
<div class="a" style="left:0px;top:287px;width:13px;height:23px;background:#5cb034"></div>
<div class="t " style="left:1.30px;top:292.89px;font-size:11.5px;color:#fff;font-weight:bold;-webkit-text-stroke:0.15px #fff;">C</div>
<div class="a" style="left:40px;top:297px;width:9px;height:1px;background:#505050"></div>
<div class="a" style="left:44px;top:297px;width:1px;height:4px;background:#505050"></div>
<div class="t " style="left:54.00px;top:293.05px;font-size:11px;color:#2e2e2e;letter-spacing:-0.25px;-webkit-text-stroke:0.45px #2e2e2e;">Hungary</div>
<div class="a" style="left:458px;top:287px;width:52px;height:23px;background:#1aab1a"></div>
<div class="t " style="right:1428.50px;top:293.05px;font-size:11px;color:#333;font-weight:bold;">45.5880</div>
<div class="t " style="right:1375.00px;top:293.05px;font-size:11px;color:#fff;font-weight:bold;">67.05</div>
<div class="t " style="right:1273.50px;top:293.05px;font-size:11px;color:#b01e24;font-weight:bold;">-0.32</div>
<svg style="left:611px;top:296px" width="9" height="6"><path d="M0 0H7L3.5 4.2Z" fill="#b01e24"/></svg>
<div class="t " style="right:1143.50px;top:293.05px;font-size:11px;color:#333;font-weight:bold;">94.3000</div>
<div class="t " style="right:1027.50px;top:293.05px;font-size:11px;color:#333;font-weight:bold;">48.34</div>
<div class="t " style="right:912.50px;top:293.05px;font-size:11px;color:#333;font-weight:bold;">0.00</div>
<div class="t " style="right:796.50px;top:293.05px;font-size:11px;color:#333;font-weight:bold;">218.8</div>
<div class="t " style="right:680.50px;top:293.05px;font-size:11px;color:#333;font-weight:bold;">67.9909</div>
<div class="t " style="right:564.50px;top:293.05px;font-size:11px;color:#333;font-weight:bold;">509.32</div>
<div class="t " style="right:448.50px;top:293.05px;font-size:11px;color:#333;font-weight:bold;">798.90</div>
<div class="t " style="right:332.50px;top:293.05px;font-size:11px;color:#333;font-weight:bold;">67.4683</div>
<div class="t " style="right:216.50px;top:293.05px;font-size:11px;color:#333;font-weight:bold;">0.5225</div>
<div class="t " style="right:91.50px;top:293.05px;font-size:11px;color:#333;font-weight:bold;">100.00</div>
<svg style="left:1795px;top:287px" width="22" height="20"><g transform="translate(0 0) scale(1.0)" fill="none" stroke="#2a9cc8" stroke-width="1.0" stroke-linejoin="round"><path d="M3.2 10.4H15.6M13.4 8.3L15.6 10.4L13.4 12.5M5.5 10.4V8.2M10.5 10.4V8.2M7.6 10.4V12.2"/><circle cx="5.5" cy="6.9" r="1.25"/><circle cx="10.5" cy="6.9" r="1.25"/><circle cx="7.6" cy="13.4" r="1.15"/></g></svg>
<svg style="left:1795px;top:287px" width="40" height="20"><g transform="translate(0 0) scale(1.0)" fill="none" stroke="#2a9cc8" stroke-width="1.1" stroke-linecap="round" stroke-linejoin="round"><path d="M21.5 6V14.2H31.3M23.6 10.6L25.4 8.8L27.3 10.9L30.5 7.9"/></g></svg>
<div class="l" style="left:0px;top:310px;width:1879px;height:1px;background:#d9d9d9"></div>
<div class="a" style="left:0px;top:311px;width:1879px;height:23px;background:#eaf4fa"></div>
<div class="a" style="left:0px;top:311px;width:13px;height:23px;background:#bebebe"></div>
<div class="t " style="left:1.30px;top:316.89px;font-size:11.5px;color:#fff;font-weight:bold;-webkit-text-stroke:0.15px #fff;">N</div>
<div class="a" style="left:40px;top:321px;width:9px;height:1px;background:#505050"></div>
<div class="a" style="left:44px;top:321px;width:1px;height:4px;background:#505050"></div>
<div class="t " style="left:54.00px;top:317.05px;font-size:11px;color:#2e2e2e;letter-spacing:-0.25px;-webkit-text-stroke:0.45px #2e2e2e;">Ireland</div>
<svg style="left:1795px;top:311px" width="22" height="20"><g transform="translate(0 0) scale(1.0)" fill="none" stroke="#2a9cc8" stroke-width="1.0" stroke-linejoin="round"><path d="M3.2 10.4H15.6M13.4 8.3L15.6 10.4L13.4 12.5M5.5 10.4V8.2M10.5 10.4V8.2M7.6 10.4V12.2"/><circle cx="5.5" cy="6.9" r="1.25"/><circle cx="10.5" cy="6.9" r="1.25"/><circle cx="7.6" cy="13.4" r="1.15"/></g></svg>
<svg style="left:1795px;top:311px" width="40" height="20"><g transform="translate(0 0) scale(1.0)" fill="none" stroke="#2a9cc8" stroke-width="1.1" stroke-linecap="round" stroke-linejoin="round"><path d="M21.5 6V14.2H31.3M23.6 10.6L25.4 8.8L27.3 10.9L30.5 7.9"/></g></svg>
<div class="l" style="left:0px;top:334px;width:1879px;height:1px;background:#d9d9d9"></div>
<div class="a" style="left:0px;top:335px;width:1879px;height:23px;background:#eaf4fa"></div>
<div class="a" style="left:0px;top:335px;width:13px;height:23px;background:#5cb034"></div>
<div class="t " style="left:1.30px;top:340.89px;font-size:11.5px;color:#fff;font-weight:bold;-webkit-text-stroke:0.15px #fff;">C</div>
<div class="a" style="left:40px;top:345px;width:9px;height:1px;background:#505050"></div>
<div class="a" style="left:44px;top:345px;width:1px;height:4px;background:#505050"></div>
<div class="t " style="left:54.00px;top:341.05px;font-size:11px;color:#2e2e2e;letter-spacing:-0.25px;-webkit-text-stroke:0.45px #2e2e2e;">Italy</div>
<div class="a" style="left:458px;top:335px;width:52px;height:23px;background:#106e1a"></div>
<div class="t " style="right:1428.50px;top:341.05px;font-size:11px;color:#333;font-weight:bold;">181.5348</div>
<div class="t " style="right:1375.00px;top:341.05px;font-size:11px;color:#fff;font-weight:bold;">89.28</div>
<div class="t " style="right:1273.50px;top:341.05px;font-size:11px;color:#b01e24;font-weight:bold;">-0.43</div>
<svg style="left:611px;top:344px" width="9" height="6"><path d="M0 0H7L3.5 4.2Z" fill="#b01e24"/></svg>
<div class="t " style="right:1143.50px;top:341.05px;font-size:11px;color:#333;font-weight:bold;">677.3500</div>
<div class="t " style="right:1027.50px;top:341.05px;font-size:11px;color:#333;font-weight:bold;">26.80</div>
<div class="t " style="right:912.50px;top:341.05px;font-size:11px;color:#333;font-weight:bold;">0.00</div>
<div class="t " style="right:796.50px;top:341.05px;font-size:11px;color:#333;font-weight:bold;">873.8</div>
<div class="t " style="right:680.50px;top:341.05px;font-size:11px;color:#333;font-weight:bold;">203.3331</div>
<div class="t " style="right:564.50px;top:341.05px;font-size:11px;color:#333;font-weight:bold;">1705.07</div>
<div class="t " style="right:448.50px;top:341.05px;font-size:11px;color:#333;font-weight:bold;">2922.60</div>
<div class="t " style="right:332.50px;top:341.05px;font-size:11px;color:#333;font-weight:bold;">203.3331</div>
<div class="t " style="right:216.50px;top:341.05px;font-size:11px;color:#333;font-weight:bold;">0.0000</div>
<div class="t " style="right:91.50px;top:341.05px;font-size:11px;color:#333;font-weight:bold;">100.00</div>
<svg style="left:1795px;top:335px" width="22" height="20"><g transform="translate(0 0) scale(1.0)" fill="none" stroke="#2a9cc8" stroke-width="1.0" stroke-linejoin="round"><path d="M3.2 10.4H15.6M13.4 8.3L15.6 10.4L13.4 12.5M5.5 10.4V8.2M10.5 10.4V8.2M7.6 10.4V12.2"/><circle cx="5.5" cy="6.9" r="1.25"/><circle cx="10.5" cy="6.9" r="1.25"/><circle cx="7.6" cy="13.4" r="1.15"/></g></svg>
<svg style="left:1795px;top:335px" width="40" height="20"><g transform="translate(0 0) scale(1.0)" fill="none" stroke="#2a9cc8" stroke-width="1.1" stroke-linecap="round" stroke-linejoin="round"><path d="M21.5 6V14.2H31.3M23.6 10.6L25.4 8.8L27.3 10.9L30.5 7.9"/></g></svg>
<div class="l" style="left:0px;top:358px;width:1879px;height:1px;background:#d9d9d9"></div>
<div class="a" style="left:0px;top:359px;width:1879px;height:23px;background:#eaf4fa"></div>
<div class="a" style="left:0px;top:359px;width:13px;height:23px;background:#5cb034"></div>
<div class="t " style="left:1.30px;top:364.89px;font-size:11.5px;color:#fff;font-weight:bold;-webkit-text-stroke:0.15px #fff;">C</div>
<div class="a" style="left:40px;top:369px;width:9px;height:1px;background:#505050"></div>
<div class="a" style="left:44px;top:369px;width:1px;height:4px;background:#505050"></div>
<div class="t " style="left:54.00px;top:365.05px;font-size:11px;color:#2e2e2e;letter-spacing:-0.25px;-webkit-text-stroke:0.45px #2e2e2e;">Latvia</div>
<div class="a" style="left:458px;top:359px;width:52px;height:23px;background:#6cb51e"></div>
<div class="t " style="right:1428.50px;top:365.05px;font-size:11px;color:#333;font-weight:bold;">14.3698</div>
<div class="t " style="right:1375.00px;top:365.05px;font-size:11px;color:#fff;font-weight:bold;">57.79</div>
<div class="t " style="right:1273.50px;top:365.05px;font-size:11px;color:#b01e24;font-weight:bold;">-0.53</div>
<svg style="left:611px;top:368px" width="9" height="6"><path d="M0 0H7L3.5 4.2Z" fill="#b01e24"/></svg>
<div class="t " style="right:1143.50px;top:365.05px;font-size:11px;color:#333;font-weight:bold;">9.2000</div>
<div class="t " style="right:1027.50px;top:365.05px;font-size:11px;color:#333;font-weight:bold;">156.19</div>
<div class="t " style="right:912.50px;top:365.05px;font-size:11px;color:#333;font-weight:bold;">0.00</div>
<div class="t " style="right:796.50px;top:365.05px;font-size:11px;color:#333;font-weight:bold;">132.0</div>
<div class="t " style="right:680.50px;top:365.05px;font-size:11px;color:#333;font-weight:bold;">24.8653</div>
<div class="t " style="right:564.50px;top:365.05px;font-size:11px;color:#333;font-weight:bold;">51.00</div>
<div class="t " style="right:448.50px;top:365.05px;font-size:11px;color:#333;font-weight:bold;">207.50</div>
<div class="t " style="right:332.50px;top:365.05px;font-size:11px;color:#333;font-weight:bold;">17.6291</div>
<div class="t " style="right:216.50px;top:365.05px;font-size:11px;color:#333;font-weight:bold;">7.2362</div>
<div class="t " style="right:91.50px;top:365.05px;font-size:11px;color:#333;font-weight:bold;">100.00</div>
<svg style="left:1795px;top:359px" width="22" height="20"><g transform="translate(0 0) scale(1.0)" fill="none" stroke="#2a9cc8" stroke-width="1.0" stroke-linejoin="round"><path d="M3.2 10.4H15.6M13.4 8.3L15.6 10.4L13.4 12.5M5.5 10.4V8.2M10.5 10.4V8.2M7.6 10.4V12.2"/><circle cx="5.5" cy="6.9" r="1.25"/><circle cx="10.5" cy="6.9" r="1.25"/><circle cx="7.6" cy="13.4" r="1.15"/></g></svg>
<svg style="left:1795px;top:359px" width="40" height="20"><g transform="translate(0 0) scale(1.0)" fill="none" stroke="#2a9cc8" stroke-width="1.1" stroke-linecap="round" stroke-linejoin="round"><path d="M21.5 6V14.2H31.3M23.6 10.6L25.4 8.8L27.3 10.9L30.5 7.9"/></g></svg>
<div class="l" style="left:0px;top:382px;width:1879px;height:1px;background:#d9d9d9"></div>
<div class="a" style="left:0px;top:383px;width:1879px;height:23px;background:#eaf4fa"></div>
<div class="a" style="left:0px;top:383px;width:13px;height:23px;background:#5cb034"></div>
<div class="t " style="left:1.30px;top:388.89px;font-size:11.5px;color:#fff;font-weight:bold;-webkit-text-stroke:0.15px #fff;">C</div>
<div class="a" style="left:40px;top:393px;width:9px;height:1px;background:#505050"></div>
<div class="a" style="left:44px;top:393px;width:1px;height:4px;background:#505050"></div>
<div class="t " style="left:54.00px;top:389.05px;font-size:11px;color:#2e2e2e;letter-spacing:-0.25px;-webkit-text-stroke:0.45px #2e2e2e;">Netherlands</div>
<div class="a" style="left:458px;top:383px;width:52px;height:23px;background:#1aab1a"></div>
<div class="t " style="right:1428.50px;top:389.05px;font-size:11px;color:#333;font-weight:bold;">97.7995</div>
<div class="t " style="right:1375.00px;top:389.05px;font-size:11px;color:#fff;font-weight:bold;">67.78</div>
<div class="t " style="right:1273.50px;top:389.05px;font-size:11px;color:#b01e24;font-weight:bold;">-0.58</div>
<svg style="left:611px;top:392px" width="9" height="6"><path d="M0 0H7L3.5 4.2Z" fill="#b01e24"/></svg>
<div class="t " style="right:1143.50px;top:389.05px;font-size:11px;color:#333;font-weight:bold;">300.1500</div>
<div class="t " style="right:1027.50px;top:389.05px;font-size:11px;color:#333;font-weight:bold;">32.58</div>
<div class="t " style="right:912.50px;top:389.05px;font-size:11px;color:#333;font-weight:bold;">17.30</div>
<div class="t " style="right:796.50px;top:389.05px;font-size:11px;color:#333;font-weight:bold;">845.4</div>
<div class="t " style="right:680.50px;top:389.05px;font-size:11px;color:#333;font-weight:bold;">144.2965</div>
<div class="t " style="right:564.50px;top:389.05px;font-size:11px;color:#333;font-weight:bold;">1440.83</div>
<div class="t " style="right:448.50px;top:389.05px;font-size:11px;color:#333;font-weight:bold;">2723.97</div>
<div class="t " style="right:332.50px;top:389.05px;font-size:11px;color:#333;font-weight:bold;">142.9267</div>
<div class="t " style="right:216.50px;top:389.05px;font-size:11px;color:#333;font-weight:bold;">1.3697</div>
<div class="t " style="right:91.50px;top:389.05px;font-size:11px;color:#333;font-weight:bold;">100.00</div>
<svg style="left:1795px;top:383px" width="22" height="20"><g transform="translate(0 0) scale(1.0)" fill="none" stroke="#2a9cc8" stroke-width="1.0" stroke-linejoin="round"><path d="M3.2 10.4H15.6M13.4 8.3L15.6 10.4L13.4 12.5M5.5 10.4V8.2M10.5 10.4V8.2M7.6 10.4V12.2"/><circle cx="5.5" cy="6.9" r="1.25"/><circle cx="10.5" cy="6.9" r="1.25"/><circle cx="7.6" cy="13.4" r="1.15"/></g></svg>
<svg style="left:1795px;top:383px" width="40" height="20"><g transform="translate(0 0) scale(1.0)" fill="none" stroke="#2a9cc8" stroke-width="1.1" stroke-linecap="round" stroke-linejoin="round"><path d="M21.5 6V14.2H31.3M23.6 10.6L25.4 8.8L27.3 10.9L30.5 7.9"/></g></svg>
<div class="l" style="left:0px;top:406px;width:1879px;height:1px;background:#d9d9d9"></div>
<div class="a" style="left:0px;top:407px;width:1879px;height:23px;background:#eaf4fa"></div>
<div class="a" style="left:0px;top:407px;width:13px;height:23px;background:#5cb034"></div>
<div class="t " style="left:1.30px;top:412.89px;font-size:11.5px;color:#fff;font-weight:bold;-webkit-text-stroke:0.15px #fff;">C</div>
<div class="a" style="left:40px;top:417px;width:9px;height:1px;background:#505050"></div>
<div class="a" style="left:44px;top:417px;width:1px;height:4px;background:#505050"></div>
<div class="t " style="left:54.00px;top:413.05px;font-size:11px;color:#2e2e2e;letter-spacing:-0.25px;-webkit-text-stroke:0.45px #2e2e2e;">Poland</div>
<div class="a" style="left:458px;top:407px;width:52px;height:23px;background:#084a0c"></div>
<div class="t " style="right:1428.50px;top:413.05px;font-size:11px;color:#333;font-weight:bold;">34.1588</div>
<div class="t " style="right:1375.00px;top:413.05px;font-size:11px;color:#fff;font-weight:bold;">94.08</div>
<div class="t " style="right:1273.50px;top:413.05px;font-size:11px;color:#b01e24;font-weight:bold;">-0.74</div>
<svg style="left:611px;top:416px" width="9" height="6"><path d="M0 0H7L3.5 4.2Z" fill="#b01e24"/></svg>
<div class="t " style="right:1143.50px;top:413.05px;font-size:11px;color:#333;font-weight:bold;">241.5000</div>
<div class="t " style="right:1027.50px;top:413.05px;font-size:11px;color:#333;font-weight:bold;">14.14</div>
<div class="t " style="right:912.50px;top:413.05px;font-size:11px;color:#333;font-weight:bold;">0.00</div>
<div class="t " style="right:796.50px;top:413.05px;font-size:11px;color:#333;font-weight:bold;">267.5</div>
<div class="t " style="right:680.50px;top:413.05px;font-size:11px;color:#333;font-weight:bold;">36.3098</div>
<div class="t " style="right:564.50px;top:413.05px;font-size:11px;color:#333;font-weight:bold;">359.01</div>
<div class="t " style="right:448.50px;top:413.05px;font-size:11px;color:#333;font-weight:bold;">595.31</div>
<div class="t " style="right:332.50px;top:413.05px;font-size:11px;color:#333;font-weight:bold;">36.2570</div>
<div class="t " style="right:216.50px;top:413.05px;font-size:11px;color:#333;font-weight:bold;">0.0528</div>
<div class="t " style="right:91.50px;top:413.05px;font-size:11px;color:#333;font-weight:bold;">100.00</div>
<svg style="left:1795px;top:407px" width="22" height="20"><g transform="translate(0 0) scale(1.0)" fill="none" stroke="#2a9cc8" stroke-width="1.0" stroke-linejoin="round"><path d="M3.2 10.4H15.6M13.4 8.3L15.6 10.4L13.4 12.5M5.5 10.4V8.2M10.5 10.4V8.2M7.6 10.4V12.2"/><circle cx="5.5" cy="6.9" r="1.25"/><circle cx="10.5" cy="6.9" r="1.25"/><circle cx="7.6" cy="13.4" r="1.15"/></g></svg>
<svg style="left:1795px;top:407px" width="40" height="20"><g transform="translate(0 0) scale(1.0)" fill="none" stroke="#2a9cc8" stroke-width="1.1" stroke-linecap="round" stroke-linejoin="round"><path d="M21.5 6V14.2H31.3M23.6 10.6L25.4 8.8L27.3 10.9L30.5 7.9"/></g></svg>
<div class="l" style="left:0px;top:430px;width:1879px;height:1px;background:#d9d9d9"></div>
<div class="a" style="left:0px;top:431px;width:1879px;height:23px;background:#eaf4fa"></div>
<div class="a" style="left:0px;top:431px;width:13px;height:23px;background:#5cb034"></div>
<div class="t " style="left:1.30px;top:436.89px;font-size:11.5px;color:#fff;font-weight:bold;-webkit-text-stroke:0.15px #fff;">C</div>
<div class="a" style="left:40px;top:441px;width:9px;height:1px;background:#505050"></div>
<div class="a" style="left:44px;top:441px;width:1px;height:4px;background:#505050"></div>
<div class="t " style="left:54.00px;top:437.05px;font-size:11px;color:#2e2e2e;letter-spacing:-0.25px;-webkit-text-stroke:0.45px #2e2e2e;">Portugal</div>
<div class="a" style="left:458px;top:431px;width:52px;height:23px;background:#106e1a"></div>
<div class="t " style="right:1428.50px;top:437.05px;font-size:11px;color:#333;font-weight:bold;">3.1639</div>
<div class="t " style="right:1375.00px;top:437.05px;font-size:11px;color:#fff;font-weight:bold;">88.62</div>
<div class="t " style="right:1273.50px;top:437.05px;font-size:11px;color:#333;font-weight:bold;">0.00</div>
<div class="t " style="right:1143.50px;top:437.05px;font-size:11px;color:#333;font-weight:bold;">42.5500</div>
<div class="t " style="right:1027.50px;top:437.05px;font-size:11px;color:#333;font-weight:bold;">7.44</div>
<div class="t " style="right:912.50px;top:437.05px;font-size:11px;color:#333;font-weight:bold;">0.00</div>
<div class="t " style="right:796.50px;top:437.05px;font-size:11px;color:#333;font-weight:bold;">0.0</div>
<div class="t " style="right:680.50px;top:437.05px;font-size:11px;color:#333;font-weight:bold;">3.5700</div>
<div class="t " style="right:564.50px;top:437.05px;font-size:11px;color:#333;font-weight:bold;">0.00</div>
<div class="t " style="right:448.50px;top:437.05px;font-size:11px;color:#333;font-weight:bold;">0.00</div>
<div class="t " style="right:332.50px;top:437.05px;font-size:11px;color:#333;font-weight:bold;">0.2162</div>
<div class="t " style="right:216.50px;top:437.05px;font-size:11px;color:#333;font-weight:bold;">3.3538</div>
<div class="t " style="right:91.50px;top:437.05px;font-size:11px;color:#333;font-weight:bold;">100.00</div>
<svg style="left:1795px;top:431px" width="22" height="20"><g transform="translate(0 0) scale(1.0)" fill="none" stroke="#2a9cc8" stroke-width="1.0" stroke-linejoin="round"><path d="M3.2 10.4H15.6M13.4 8.3L15.6 10.4L13.4 12.5M5.5 10.4V8.2M10.5 10.4V8.2M7.6 10.4V12.2"/><circle cx="5.5" cy="6.9" r="1.25"/><circle cx="10.5" cy="6.9" r="1.25"/><circle cx="7.6" cy="13.4" r="1.15"/></g></svg>
<svg style="left:1795px;top:431px" width="40" height="20"><g transform="translate(0 0) scale(1.0)" fill="none" stroke="#2a9cc8" stroke-width="1.1" stroke-linecap="round" stroke-linejoin="round"><path d="M21.5 6V14.2H31.3M23.6 10.6L25.4 8.8L27.3 10.9L30.5 7.9"/></g></svg>
<div class="l" style="left:0px;top:454px;width:1879px;height:1px;background:#d9d9d9"></div>
<div class="a" style="left:0px;top:455px;width:1879px;height:23px;background:#eaf4fa"></div>
<div class="a" style="left:0px;top:455px;width:13px;height:23px;background:#5cb034"></div>
<div class="t " style="left:1.30px;top:460.89px;font-size:11.5px;color:#fff;font-weight:bold;-webkit-text-stroke:0.15px #fff;">C</div>
<div class="a" style="left:40px;top:465px;width:9px;height:1px;background:#505050"></div>
<div class="a" style="left:44px;top:465px;width:1px;height:4px;background:#505050"></div>
<div class="t " style="left:54.00px;top:461.05px;font-size:11px;color:#2e2e2e;letter-spacing:-0.25px;-webkit-text-stroke:0.45px #2e2e2e;">Romania</div>
<div class="a" style="left:458px;top:455px;width:52px;height:23px;background:#084a0c"></div>
<div class="t " style="right:1428.50px;top:461.05px;font-size:11px;color:#333;font-weight:bold;">31.5648</div>
<div class="t " style="right:1375.00px;top:461.05px;font-size:11px;color:#fff;font-weight:bold;">93.21</div>
<div class="t " style="right:1273.50px;top:461.05px;font-size:11px;color:#b01e24;font-weight:bold;">-0.47</div>
<svg style="left:611px;top:464px" width="9" height="6"><path d="M0 0H7L3.5 4.2Z" fill="#b01e24"/></svg>
<div class="t " style="right:1143.50px;top:461.05px;font-size:11px;color:#333;font-weight:bold;">109.2500</div>
<div class="t " style="right:1027.50px;top:461.05px;font-size:11px;color:#333;font-weight:bold;">28.89</div>
<div class="t " style="right:912.50px;top:461.05px;font-size:11px;color:#333;font-weight:bold;">0.00</div>
<div class="t " style="right:796.50px;top:461.05px;font-size:11px;color:#333;font-weight:bold;">154.4</div>
<div class="t " style="right:680.50px;top:461.05px;font-size:11px;color:#333;font-weight:bold;">33.8636</div>
<div class="t " style="right:564.50px;top:461.05px;font-size:11px;color:#333;font-weight:bold;">240.75</div>
<div class="t " style="right:448.50px;top:461.05px;font-size:11px;color:#333;font-weight:bold;">338.44</div>
<div class="t " style="right:332.50px;top:461.05px;font-size:11px;color:#333;font-weight:bold;">33.8636</div>
<div class="t " style="right:216.50px;top:461.05px;font-size:11px;color:#333;font-weight:bold;">0.0000</div>
<div class="t " style="right:91.50px;top:461.05px;font-size:11px;color:#333;font-weight:bold;">100.00</div>
<svg style="left:1795px;top:455px" width="22" height="20"><g transform="translate(0 0) scale(1.0)" fill="none" stroke="#2a9cc8" stroke-width="1.0" stroke-linejoin="round"><path d="M3.2 10.4H15.6M13.4 8.3L15.6 10.4L13.4 12.5M5.5 10.4V8.2M10.5 10.4V8.2M7.6 10.4V12.2"/><circle cx="5.5" cy="6.9" r="1.25"/><circle cx="10.5" cy="6.9" r="1.25"/><circle cx="7.6" cy="13.4" r="1.15"/></g></svg>
<svg style="left:1795px;top:455px" width="40" height="20"><g transform="translate(0 0) scale(1.0)" fill="none" stroke="#2a9cc8" stroke-width="1.1" stroke-linecap="round" stroke-linejoin="round"><path d="M21.5 6V14.2H31.3M23.6 10.6L25.4 8.8L27.3 10.9L30.5 7.9"/></g></svg>
<div class="l" style="left:0px;top:478px;width:1879px;height:1px;background:#d9d9d9"></div>
<div class="a" style="left:0px;top:479px;width:1879px;height:23px;background:#eaf4fa"></div>
<div class="a" style="left:0px;top:479px;width:13px;height:23px;background:#5cb034"></div>
<div class="t " style="left:1.30px;top:484.89px;font-size:11.5px;color:#fff;font-weight:bold;-webkit-text-stroke:0.15px #fff;">C</div>
<div class="a" style="left:40px;top:489px;width:9px;height:1px;background:#505050"></div>
<div class="a" style="left:44px;top:489px;width:1px;height:4px;background:#505050"></div>
<div class="t " style="left:54.00px;top:485.05px;font-size:11px;color:#2e2e2e;letter-spacing:-0.25px;-webkit-text-stroke:0.45px #2e2e2e;">Slovakia</div>
<div class="a" style="left:458px;top:479px;width:52px;height:23px;background:#48a023"></div>
<div class="t " style="right:1428.50px;top:485.05px;font-size:11px;color:#333;font-weight:bold;">25.8237</div>
<div class="t " style="right:1375.00px;top:485.05px;font-size:11px;color:#fff;font-weight:bold;">70.63</div>
<div class="t " style="right:1273.50px;top:485.05px;font-size:11px;color:#b01e24;font-weight:bold;">-0.37</div>
<svg style="left:611px;top:488px" width="9" height="6"><path d="M0 0H7L3.5 4.2Z" fill="#b01e24"/></svg>
<div class="t " style="right:1143.50px;top:485.05px;font-size:11px;color:#333;font-weight:bold;">49.4500</div>
<div class="t " style="right:1027.50px;top:485.05px;font-size:11px;color:#333;font-weight:bold;">52.22</div>
<div class="t " style="right:912.50px;top:485.05px;font-size:11px;color:#333;font-weight:bold;">61.66</div>
<div class="t " style="right:796.50px;top:485.05px;font-size:11px;color:#333;font-weight:bold;">196.5</div>
<div class="t " style="right:680.50px;top:485.05px;font-size:11px;color:#333;font-weight:bold;">36.5630</div>
<div class="t " style="right:564.50px;top:485.05px;font-size:11px;color:#333;font-weight:bold;">410.96</div>
<div class="t " style="right:448.50px;top:485.05px;font-size:11px;color:#333;font-weight:bold;">491.56</div>
<div class="t " style="right:332.50px;top:485.05px;font-size:11px;color:#333;font-weight:bold;">31.9893</div>
<div class="t " style="right:216.50px;top:485.05px;font-size:11px;color:#333;font-weight:bold;">4.5737</div>
<div class="t " style="right:91.50px;top:485.05px;font-size:11px;color:#333;font-weight:bold;">100.00</div>
<svg style="left:1795px;top:479px" width="22" height="20"><g transform="translate(0 0) scale(1.0)" fill="none" stroke="#2a9cc8" stroke-width="1.0" stroke-linejoin="round"><path d="M3.2 10.4H15.6M13.4 8.3L15.6 10.4L13.4 12.5M5.5 10.4V8.2M10.5 10.4V8.2M7.6 10.4V12.2"/><circle cx="5.5" cy="6.9" r="1.25"/><circle cx="10.5" cy="6.9" r="1.25"/><circle cx="7.6" cy="13.4" r="1.15"/></g></svg>
<svg style="left:1795px;top:479px" width="40" height="20"><g transform="translate(0 0) scale(1.0)" fill="none" stroke="#2a9cc8" stroke-width="1.1" stroke-linecap="round" stroke-linejoin="round"><path d="M21.5 6V14.2H31.3M23.6 10.6L25.4 8.8L27.3 10.9L30.5 7.9"/></g></svg>
<div class="l" style="left:0px;top:502px;width:1879px;height:1px;background:#d9d9d9"></div>
<div class="a" style="left:0px;top:503px;width:1879px;height:23px;background:#eaf4fa"></div>
<div class="a" style="left:0px;top:503px;width:13px;height:23px;background:#ffa500"></div>
<div class="t " style="left:1.30px;top:508.89px;font-size:11.5px;color:#fff;font-weight:bold;-webkit-text-stroke:0.15px #fff;">E</div>
<div class="a" style="left:40px;top:513px;width:9px;height:1px;background:#505050"></div>
<div class="a" style="left:44px;top:513px;width:1px;height:4px;background:#505050"></div>
<div class="t " style="left:54.00px;top:509.05px;font-size:11px;color:#2e2e2e;letter-spacing:-0.25px;-webkit-text-stroke:0.45px #2e2e2e;">Spain</div>
<div class="a" style="left:458px;top:503px;width:52px;height:23px;background:#106e1a"></div>
<div class="t " style="right:1428.50px;top:509.05px;font-size:11px;color:#333;font-weight:bold;">29.9558</div>
<div class="t " style="right:1375.00px;top:509.05px;font-size:11px;color:#fff;font-weight:bold;">83.60</div>
<div class="t " style="right:1273.50px;top:509.05px;font-size:11px;color:#4cb034;font-weight:bold;">1.51</div>
<svg style="left:611px;top:510.6px" width="9" height="6"><path d="M0 4.2H7L3.5 0Z" fill="#4cb034"/></svg>
<div class="t " style="right:1143.50px;top:509.05px;font-size:11px;color:#333;font-weight:bold;">326.6000</div>
<div class="t " style="right:1027.50px;top:509.05px;font-size:11px;color:#333;font-weight:bold;">9.17</div>
<div class="t " style="right:912.50px;top:509.05px;font-size:11px;color:#333;font-weight:bold;">22.12</div>
<div class="t " style="right:796.50px;top:509.05px;font-size:11px;color:#333;font-weight:bold;">21.4</div>
<div class="t " style="right:680.50px;top:509.05px;font-size:11px;color:#333;font-weight:bold;">35.8318</div>
<div class="t " style="right:564.50px;top:509.05px;font-size:11px;color:#333;font-weight:bold;">143.34</div>
<div class="t " style="right:448.50px;top:509.05px;font-size:11px;color:#333;font-weight:bold;">208.96</div>
<div class="t " style="right:332.50px;top:509.05px;font-size:11px;color:#333;font-weight:bold;">31.4564</div>
<div class="t " style="right:216.50px;top:509.05px;font-size:11px;color:#333;font-weight:bold;">4.3755</div>
<div class="t " style="right:91.50px;top:509.05px;font-size:11px;color:#333;font-weight:bold;">100.00</div>
<svg style="left:1795px;top:503px" width="22" height="20"><g transform="translate(0 0) scale(1.0)" fill="none" stroke="#2a9cc8" stroke-width="1.0" stroke-linejoin="round"><path d="M3.2 10.4H15.6M13.4 8.3L15.6 10.4L13.4 12.5M5.5 10.4V8.2M10.5 10.4V8.2M7.6 10.4V12.2"/><circle cx="5.5" cy="6.9" r="1.25"/><circle cx="10.5" cy="6.9" r="1.25"/><circle cx="7.6" cy="13.4" r="1.15"/></g></svg>
<svg style="left:1795px;top:503px" width="40" height="20"><g transform="translate(0 0) scale(1.0)" fill="none" stroke="#2a9cc8" stroke-width="1.1" stroke-linecap="round" stroke-linejoin="round"><path d="M21.5 6V14.2H31.3M23.6 10.6L25.4 8.8L27.3 10.9L30.5 7.9"/></g></svg>
<div class="l" style="left:0px;top:526px;width:1879px;height:1px;background:#d9d9d9"></div>
<div class="a" style="left:0px;top:527px;width:1879px;height:23px;background:#eaf4fa"></div>
<div class="a" style="left:0px;top:527px;width:13px;height:23px;background:#5cb034"></div>
<div class="t " style="left:1.30px;top:532.89px;font-size:11.5px;color:#fff;font-weight:bold;-webkit-text-stroke:0.15px #fff;">C</div>
<div class="a" style="left:40px;top:537px;width:9px;height:1px;background:#505050"></div>
<div class="a" style="left:44px;top:537px;width:1px;height:4px;background:#505050"></div>
<div class="t " style="left:54.00px;top:533.04px;font-size:11px;color:#2e2e2e;letter-spacing:-0.25px;-webkit-text-stroke:0.45px #2e2e2e;">Sweden</div>
<div class="a" style="left:458px;top:527px;width:52px;height:23px;background:#084a0c"></div>
<div class="t " style="right:1428.50px;top:533.04px;font-size:11px;color:#333;font-weight:bold;">0.0893</div>
<div class="t " style="right:1375.00px;top:533.04px;font-size:11px;color:#fff;font-weight:bold;">102.07</div>
<div class="t " style="right:1273.50px;top:533.04px;font-size:11px;color:#333;font-weight:bold;">0.00</div>
<div class="t " style="right:1143.50px;top:533.04px;font-size:11px;color:#333;font-weight:bold;">11.5000</div>
<div class="t " style="right:1027.50px;top:533.04px;font-size:11px;color:#333;font-weight:bold;">0.78</div>
<div class="t " style="right:912.50px;top:533.04px;font-size:11px;color:#333;font-weight:bold;">0.00</div>
<div class="t " style="right:796.50px;top:533.04px;font-size:11px;color:#333;font-weight:bold;">0.0</div>
<div class="t " style="right:680.50px;top:533.04px;font-size:11px;color:#333;font-weight:bold;">0.0875</div>
<div class="t " style="right:564.50px;top:533.04px;font-size:11px;color:#333;font-weight:bold;">6.60</div>
<div class="t " style="right:448.50px;top:533.04px;font-size:11px;color:#333;font-weight:bold;">8.73</div>
<div class="t " style="right:332.50px;top:533.04px;font-size:11px;color:#333;font-weight:bold;">0.0830</div>
<div class="t " style="right:216.50px;top:533.04px;font-size:11px;color:#333;font-weight:bold;">0.0045</div>
<div class="t " style="right:91.50px;top:533.04px;font-size:11px;color:#333;font-weight:bold;">100.00</div>
<svg style="left:1795px;top:527px" width="22" height="20"><g transform="translate(0 0) scale(1.0)" fill="none" stroke="#2a9cc8" stroke-width="1.0" stroke-linejoin="round"><path d="M3.2 10.4H15.6M13.4 8.3L15.6 10.4L13.4 12.5M5.5 10.4V8.2M10.5 10.4V8.2M7.6 10.4V12.2"/><circle cx="5.5" cy="6.9" r="1.25"/><circle cx="10.5" cy="6.9" r="1.25"/><circle cx="7.6" cy="13.4" r="1.15"/></g></svg>
<svg style="left:1795px;top:527px" width="40" height="20"><g transform="translate(0 0) scale(1.0)" fill="none" stroke="#2a9cc8" stroke-width="1.1" stroke-linecap="round" stroke-linejoin="round"><path d="M21.5 6V14.2H31.3M23.6 10.6L25.4 8.8L27.3 10.9L30.5 7.9"/></g></svg>
<div class="l" style="left:0px;top:550px;width:1879px;height:1px;background:#d9d9d9"></div>
<div class="a" style="left:0px;top:551px;width:1879px;height:23px;background:#eaf4fa"></div>
<div class="a" style="left:0px;top:551px;width:13px;height:23px;background:#bebebe"></div>
<div class="t " style="left:1.30px;top:556.89px;font-size:11.5px;color:#fff;font-weight:bold;-webkit-text-stroke:0.15px #fff;">N</div>
<div class="a" style="left:40px;top:561px;width:9px;height:1px;background:#505050"></div>
<div class="a" style="left:44px;top:561px;width:1px;height:4px;background:#505050"></div>
<div class="t " style="left:54.00px;top:557.04px;font-size:11px;color:#2e2e2e;letter-spacing:-0.25px;-webkit-text-stroke:0.45px #2e2e2e;">United Kingdom (Pre-Brexit)</div>
<svg style="left:1795px;top:551px" width="22" height="20"><g transform="translate(0 0) scale(1.0)" fill="none" stroke="#2a9cc8" stroke-width="1.0" stroke-linejoin="round"><path d="M3.2 10.4H15.6M13.4 8.3L15.6 10.4L13.4 12.5M5.5 10.4V8.2M10.5 10.4V8.2M7.6 10.4V12.2"/><circle cx="5.5" cy="6.9" r="1.25"/><circle cx="10.5" cy="6.9" r="1.25"/><circle cx="7.6" cy="13.4" r="1.15"/></g></svg>
<svg style="left:1795px;top:551px" width="40" height="20"><g transform="translate(0 0) scale(1.0)" fill="none" stroke="#2a9cc8" stroke-width="1.1" stroke-linecap="round" stroke-linejoin="round"><path d="M21.5 6V14.2H31.3M23.6 10.6L25.4 8.8L27.3 10.9L30.5 7.9"/></g></svg>
<div class="l" style="left:0px;top:574px;width:1879px;height:1px;background:#d9d9d9"></div>
<div class="a" style="left:0px;top:575px;width:1879px;height:45px;background:#eeeeee"></div>
<div class="a" style="left:0px;top:575px;width:13px;height:45px;background:#ffa500"></div>
<div class="t " style="left:1.00px;top:582.24px;font-size:13px;color:#fff;font-weight:bold;">E</div>
<div class="a" style="left:36px;top:587px;width:11px;height:1px;background:#666"></div>
<div class="t " style="left:51.50px;top:582.69px;font-size:12.5px;color:#333;letter-spacing:-0.15px;-webkit-text-stroke:0.55px #333;">Non-EU</div>
<div class="a" style="left:458px;top:575px;width:52px;height:45px;background:#ff6611"></div>
<div class="t " style="right:1428.50px;top:582.24px;font-size:13px;color:#333;font-weight:bold;">94.6486</div>
<div class="t " style="right:1375.00px;top:582.24px;font-size:13px;color:#fff;font-weight:bold;">28.68</div>
<div class="t " style="right:1275.50px;top:582.24px;font-size:13px;color:#b01e24;font-weight:bold;">-0.06</div>
<svg style="left:609.8px;top:585.6px" width="9" height="6"><path d="M0 0H8.19L4.095 4.914Z" fill="#b01e24"/></svg>
<div class="t " style="right:1143.50px;top:582.24px;font-size:13px;color:#333;font-weight:bold;">228.8500</div>
<div class="t " style="right:1027.50px;top:582.24px;font-size:13px;color:#333;font-weight:bold;">0.00</div>
<div class="t " style="right:912.50px;top:582.24px;font-size:13px;color:#333;font-weight:bold;">0.00</div>
<div class="t " style="right:796.50px;top:582.24px;font-size:13px;color:#333;font-weight:bold;">162.2</div>
<div class="t " style="right:680.50px;top:582.24px;font-size:13px;color:#333;font-weight:bold;">329.9847</div>
<div class="t " style="right:564.50px;top:582.24px;font-size:13px;color:#333;font-weight:bold;">2850.64</div>
<div class="t " style="right:448.50px;top:582.24px;font-size:13px;color:#333;font-weight:bold;">2148.09</div>
<div class="t " style="right:91.50px;top:582.24px;font-size:13px;color:#333;font-weight:bold;">93.07</div>
<svg style="left:1795px;top:575px" width="22" height="20"><g transform="translate(-0.46 -0.1) scale(1.22)" fill="none" stroke="#2a9cc8" stroke-width="1.0245901639344261" stroke-linejoin="round"><path d="M3.2 10.4H15.6M13.4 8.3L15.6 10.4L13.4 12.5M5.5 10.4V8.2M10.5 10.4V8.2M7.6 10.4V12.2"/><circle cx="5.5" cy="6.9" r="1.25"/><circle cx="10.5" cy="6.9" r="1.25"/><circle cx="7.6" cy="13.4" r="1.15"/></g></svg>
<svg style="left:1795px;top:575px" width="40" height="20"><g transform="translate(-1.7 -0.05) scale(1.22)" fill="none" stroke="#2a9cc8" stroke-width="1.0655737704918034" stroke-linecap="round" stroke-linejoin="round"><path d="M21.5 6V14.2H31.3M23.6 10.6L25.4 8.8L27.3 10.9L30.5 7.9"/></g></svg>
<div class="l" style="left:0px;top:620px;width:1879px;height:1px;background:#d9d9d9"></div>
<div class="a" style="left:0px;top:621px;width:1879px;height:23px;background:#eaf4fa"></div>
<div class="a" style="left:0px;top:621px;width:13px;height:23px;background:#bebebe"></div>
<div class="t " style="left:1.30px;top:626.89px;font-size:11.5px;color:#fff;font-weight:bold;-webkit-text-stroke:0.15px #fff;">N</div>
<div class="a" style="left:40px;top:631px;width:9px;height:1px;background:#505050"></div>
<div class="a" style="left:44px;top:631px;width:1px;height:4px;background:#505050"></div>
<div class="t " style="left:54.00px;top:627.04px;font-size:11px;color:#2e2e2e;letter-spacing:-0.25px;-webkit-text-stroke:0.45px #2e2e2e;">Serbia</div>
<svg style="left:1795px;top:621px" width="22" height="20"><g transform="translate(0 0) scale(1.0)" fill="none" stroke="#2a9cc8" stroke-width="1.0" stroke-linejoin="round"><path d="M3.2 10.4H15.6M13.4 8.3L15.6 10.4L13.4 12.5M5.5 10.4V8.2M10.5 10.4V8.2M7.6 10.4V12.2"/><circle cx="5.5" cy="6.9" r="1.25"/><circle cx="10.5" cy="6.9" r="1.25"/><circle cx="7.6" cy="13.4" r="1.15"/></g></svg>
<svg style="left:1795px;top:621px" width="40" height="20"><g transform="translate(0 0) scale(1.0)" fill="none" stroke="#2a9cc8" stroke-width="1.1" stroke-linecap="round" stroke-linejoin="round"><path d="M21.5 6V14.2H31.3M23.6 10.6L25.4 8.8L27.3 10.9L30.5 7.9"/></g></svg>
<div class="l" style="left:0px;top:644px;width:1879px;height:1px;background:#d9d9d9"></div>
<div class="a" style="left:0px;top:645px;width:1879px;height:23px;background:#eaf4fa"></div>
<div class="a" style="left:0px;top:645px;width:13px;height:23px;background:#5cb034"></div>
<div class="t " style="left:1.30px;top:650.89px;font-size:11.5px;color:#fff;font-weight:bold;-webkit-text-stroke:0.15px #fff;">C</div>
<div class="a" style="left:40px;top:655px;width:9px;height:1px;background:#505050"></div>
<div class="a" style="left:44px;top:655px;width:1px;height:4px;background:#505050"></div>
<div class="t " style="left:54.00px;top:651.04px;font-size:11px;color:#2e2e2e;letter-spacing:-0.25px;-webkit-text-stroke:0.45px #2e2e2e;">Ukraine</div>
<div class="a" style="left:458px;top:645px;width:52px;height:23px;background:#ff6611"></div>
<div class="t " style="right:1428.50px;top:651.04px;font-size:11px;color:#333;font-weight:bold;">89.0712</div>
<div class="t " style="right:1375.00px;top:651.04px;font-size:11px;color:#fff;font-weight:bold;">27.82</div>
<div class="t " style="right:1273.50px;top:651.04px;font-size:11px;color:#b01e24;font-weight:bold;">-0.03</div>
<svg style="left:611px;top:654px" width="9" height="6"><path d="M0 0H7L3.5 4.2Z" fill="#b01e24"/></svg>
<div class="t " style="right:1143.50px;top:651.04px;font-size:11px;color:#333;font-weight:bold;">228.8500</div>
<div class="t " style="right:1027.50px;top:651.04px;font-size:11px;color:#333;font-weight:bold;">38.92</div>
<div class="t " style="right:912.50px;top:651.04px;font-size:11px;color:#333;font-weight:bold;">0.00</div>
<div class="t " style="right:796.50px;top:651.04px;font-size:11px;color:#333;font-weight:bold;">81.0</div>
<div class="t " style="right:680.50px;top:651.04px;font-size:11px;color:#333;font-weight:bold;">320.1212</div>
<div class="t " style="right:564.50px;top:651.04px;font-size:11px;color:#333;font-weight:bold;">2236.71</div>
<div class="t " style="right:448.50px;top:651.04px;font-size:11px;color:#333;font-weight:bold;">1548.31</div>
<div class="t " style="right:91.50px;top:651.04px;font-size:11px;color:#333;font-weight:bold;">100.00</div>
<svg style="left:1795px;top:645px" width="22" height="20"><g transform="translate(0 0) scale(1.0)" fill="none" stroke="#2a9cc8" stroke-width="1.0" stroke-linejoin="round"><path d="M3.2 10.4H15.6M13.4 8.3L15.6 10.4L13.4 12.5M5.5 10.4V8.2M10.5 10.4V8.2M7.6 10.4V12.2"/><circle cx="5.5" cy="6.9" r="1.25"/><circle cx="10.5" cy="6.9" r="1.25"/><circle cx="7.6" cy="13.4" r="1.15"/></g></svg>
<svg style="left:1795px;top:645px" width="40" height="20"><g transform="translate(0 0) scale(1.0)" fill="none" stroke="#2a9cc8" stroke-width="1.1" stroke-linecap="round" stroke-linejoin="round"><path d="M21.5 6V14.2H31.3M23.6 10.6L25.4 8.8L27.3 10.9L30.5 7.9"/></g></svg>
<div class="l" style="left:0px;top:668px;width:1879px;height:1px;background:#d9d9d9"></div>
<div class="a" style="left:0px;top:669px;width:1879px;height:23px;background:#eaf4fa"></div>
<div class="a" style="left:0px;top:669px;width:13px;height:23px;background:#ffa500"></div>
<div class="t " style="left:1.30px;top:674.89px;font-size:11.5px;color:#fff;font-weight:bold;-webkit-text-stroke:0.15px #fff;">E</div>
<div class="a" style="left:40px;top:679px;width:9px;height:1px;background:#505050"></div>
<div class="a" style="left:44px;top:679px;width:1px;height:4px;background:#505050"></div>
<div class="t " style="left:54.00px;top:675.04px;font-size:11px;color:#2e2e2e;letter-spacing:-0.25px;-webkit-text-stroke:0.45px #2e2e2e;">United Kingdom (Post-Brexit)</div>
<div class="a" style="left:458px;top:669px;width:52px;height:23px;background:#64b41e"></div>
<div class="t " style="right:1428.50px;top:675.04px;font-size:11px;color:#333;font-weight:bold;">5.5773</div>
<div class="t " style="right:1375.00px;top:675.04px;font-size:11px;color:#fff;font-weight:bold;">56.54</div>
<div class="t " style="right:1273.50px;top:675.04px;font-size:11px;color:#b01e24;font-weight:bold;">-0.82</div>
<svg style="left:611px;top:678px" width="9" height="6"><path d="M0 0H7L3.5 4.2Z" fill="#b01e24"/></svg>
<div class="t " style="right:1027.50px;top:675.04px;font-size:11px;color:#333;font-weight:bold;">0.00</div>
<div class="t " style="right:912.50px;top:675.04px;font-size:11px;color:#333;font-weight:bold;">0.00</div>
<div class="t " style="right:796.50px;top:675.04px;font-size:11px;color:#333;font-weight:bold;">81.2</div>
<div class="t " style="right:680.50px;top:675.04px;font-size:11px;color:#333;font-weight:bold;">9.8636</div>
<div class="t " style="right:564.50px;top:675.04px;font-size:11px;color:#333;font-weight:bold;">613.93</div>
<div class="t " style="right:448.50px;top:675.04px;font-size:11px;color:#333;font-weight:bold;">599.78</div>
<div class="t " style="right:91.50px;top:675.04px;font-size:11px;color:#333;font-weight:bold;">28.64</div>
<svg style="left:1795px;top:669px" width="22" height="20"><g transform="translate(0 0) scale(1.0)" fill="none" stroke="#2a9cc8" stroke-width="1.0" stroke-linejoin="round"><path d="M3.2 10.4H15.6M13.4 8.3L15.6 10.4L13.4 12.5M5.5 10.4V8.2M10.5 10.4V8.2M7.6 10.4V12.2"/><circle cx="5.5" cy="6.9" r="1.25"/><circle cx="10.5" cy="6.9" r="1.25"/><circle cx="7.6" cy="13.4" r="1.15"/></g></svg>
<svg style="left:1795px;top:669px" width="40" height="20"><g transform="translate(0 0) scale(1.0)" fill="none" stroke="#2a9cc8" stroke-width="1.1" stroke-linecap="round" stroke-linejoin="round"><path d="M21.5 6V14.2H31.3M23.6 10.6L25.4 8.8L27.3 10.9L30.5 7.9"/></g></svg>
<div class="l" style="left:0px;top:692px;width:1879px;height:1px;background:#d9d9d9"></div>
<div class="l" style="left:13px;top:49px;width:1px;height:644px;background:#d9d9d9"></div>
<div class="l" style="left:341px;top:49px;width:1px;height:644px;background:#d9d9d9"></div>
<div class="l" style="left:457px;top:49px;width:1px;height:644px;background:#d9d9d9"></div>
<div class="l" style="left:510px;top:49px;width:1px;height:644px;background:#d9d9d9"></div>
<div class="l" style="left:626px;top:49px;width:1px;height:644px;background:#d9d9d9"></div>
<div class="l" style="left:742px;top:49px;width:1px;height:644px;background:#d9d9d9"></div>
<div class="l" style="left:858px;top:49px;width:1px;height:644px;background:#d9d9d9"></div>
<div class="l" style="left:973px;top:49px;width:1px;height:644px;background:#d9d9d9"></div>
<div class="l" style="left:1089px;top:49px;width:1px;height:644px;background:#d9d9d9"></div>
<div class="l" style="left:1205px;top:49px;width:1px;height:644px;background:#d9d9d9"></div>
<div class="l" style="left:1321px;top:49px;width:1px;height:644px;background:#d9d9d9"></div>
<div class="l" style="left:1437px;top:49px;width:1px;height:644px;background:#d9d9d9"></div>
<div class="l" style="left:1553px;top:49px;width:1px;height:644px;background:#d9d9d9"></div>
<div class="l" style="left:1669px;top:49px;width:1px;height:644px;background:#d9d9d9"></div>
<div class="l" style="left:1794px;top:49px;width:1px;height:644px;background:#d9d9d9"></div>
<svg style="left:0;top:0" width="1882" height="693">
<path d="M339.6 479.5V455.3H510.4V479.5" fill="none" stroke="#ec1c24" stroke-width="4.6" stroke-linejoin="round"/>
<rect x="7.4" y="477.1" width="892.6" height="4.8" fill="#ec1c24"/><circle cx="7.4" cy="479.5" r="2.4" fill="#ec1c24"/>
<rect x="900" y="476.1" width="893.6" height="4.8" fill="#ec1c24"/><circle cx="1793.6" cy="478.5" r="2.4" fill="#ec1c24"/>
</svg>
</body></html>
